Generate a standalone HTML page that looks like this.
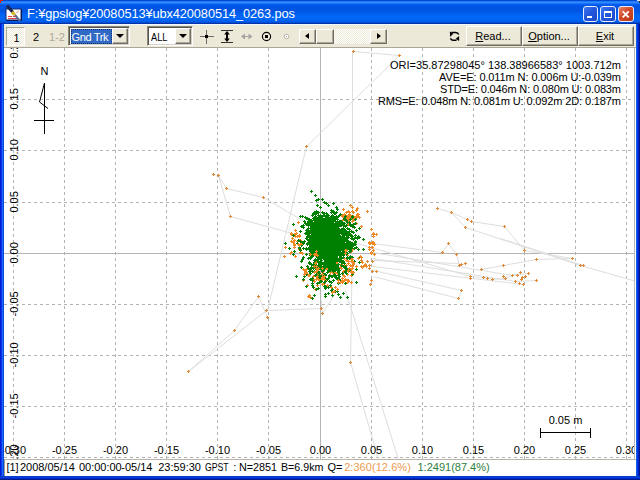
<!DOCTYPE html>
<html><head><meta charset="utf-8"><title>RTKPLOT</title>
<style>
html,body{margin:0;padding:0;width:640px;height:480px;overflow:hidden;background:#0b3fdc;font-family:"Liberation Sans",sans-serif;font-size:11px;color:#000}
*{box-sizing:border-box}
.abs{position:absolute}
#frame{position:absolute;left:0;top:0;width:640px;height:480px;background:linear-gradient(90deg,#0019d8 0 1px,#0838e8 1px 2px,#1868ff 2px 3px,#0848d8 3px 4px,#0848d8 4px 636px,#145ceb 636px 637px,#003ce1 637px 638px,#0028c8 638px 639px,#00148c 639px 640px)}
#title{position:absolute;left:0;top:0;width:640px;height:24px;background:linear-gradient(180deg,rgb(0,72,205) 0px 1px,rgb(30,120,250) 1px 2px,rgb(50,140,255) 2px 3px,rgb(25,115,250) 3px 4px,rgb(10,95,240) 4px 5px,rgb(0,86,232) 5px 6px,rgb(0,84,228) 6px 7px,rgb(0,84,226) 7px 8px,rgb(0,84,226) 8px 9px,rgb(0,84,226) 9px 10px,rgb(0,84,226) 10px 11px,rgb(0,86,228) 11px 12px,rgb(0,90,232) 12px 13px,rgb(0,94,236) 13px 14px,rgb(0,98,240) 14px 15px,rgb(0,100,243) 15px 16px,rgb(0,102,245) 16px 17px,rgb(0,102,245) 17px 18px,rgb(0,102,245) 18px 19px,rgb(0,100,243) 19px 20px,rgb(0,98,240) 20px 21px,rgb(0,92,232) 21px 22px,rgb(0,78,212) 22px 23px,rgb(0,50,170) 23px 24px)}
#title .txt{position:absolute;left:27px;top:5.5px;font-size:12.8px;line-height:16px;color:#fff;white-space:pre;letter-spacing:-0.1px}
.cb{position:absolute;top:5.5px;width:15.5px;height:16.5px;border:1px solid #e8eefc;border-radius:3px;background:linear-gradient(135deg,#3c78f0 0,#2458dc 45%,#1c48c8 100%)}
#bclose{background:linear-gradient(135deg,#e8866a 0,#d24a28 45%,#b83a1c 100%)}
#tb{position:absolute;left:4px;top:24px;width:632px;height:24px;background:#ece9d8;border-top:1px solid #eef9fc;border-bottom:1px solid #aca899}
#plot{position:absolute;left:4px;top:48px}
#status{position:absolute;left:4px;top:459px;width:632px;height:17px;background:#fff;border-top:1px solid #b8b5a8;border-left:1px solid #9d9a8c}
#status span{position:absolute;top:1px;line-height:13px;white-space:pre}
#bottom{position:absolute;left:0;top:476px;width:640px;height:4px;background:linear-gradient(180deg,#0a3cc8 0 1px,#003ce1 1px 2px,#0028be 2px 3px,#00198c 3px 4px)}
.btn{position:absolute;top:1px;height:20px;width:56px;padding-right:2px;background:#ece9d8;border:1px solid;border-color:#fff #716f64 #716f64 #fff;box-shadow:inset -1px -1px 0 #aca899;text-align:center;line-height:19px;white-space:pre}
.btn u{text-decoration:underline}
.combo{position:absolute;top:1px;height:20px;background:#fff;border:1px solid;border-color:#8a887c #fff #fff #8a887c;box-shadow:inset 1px 1px 0 #55534a,inset -1px -1px 0 #d4d0c8}
.dd{position:absolute;top:1px;right:1px;width:16px;height:16px;background:#ece9d8;border:1px solid;border-color:#fff #716f64 #716f64 #fff;box-shadow:inset -1px -1px 0 #aca899}
.dd:after{content:"";position:absolute;left:3px;top:5px;border:4px solid transparent;border-top-color:#000;border-bottom:0;border-left-width:4px;border-right-width:4px}
.chk{background-image:conic-gradient(#fff 25%,#ece9d8 0 50%,#fff 0 75%,#ece9d8 0);background-size:2px 2px}
</style></head><body>
<div id="frame"></div>
<div id="title">
 <svg class="abs" style="left:5px;top:4px" width="18" height="18" viewBox="0 0 18 18">
  <rect x="1" y="5" width="15" height="11" fill="#fff" stroke="#1a2a6c" stroke-width="1"/>
  <path d="M1.5 16.5H16.5V5.5" stroke="#0a1a50" fill="none"/>
  <path d="M3 12.5h4M8 12.5h3M3 14.5h9" stroke="#e04040" stroke-width="1"/>
  <path d="M11 9l3-2" stroke="#f0a0a0"/>
  <path d="M2 1.5L8 8.5" stroke="#1a2450" stroke-width="3"/>
  <path d="M7 8l3 3" stroke="#d8b820" stroke-width="3"/>
  <path d="M10 11l5 6" stroke="#5a6a9a" stroke-width="2"/>
 </svg>
 <div class="txt">F:¥gpslog¥20080513¥ubx420080514_0263.pos</div>
 <div class="cb" style="left:582.5px"><div class="abs" style="left:3.5px;top:9px;width:4.5px;height:2.5px;background:#fff"></div></div>
 <div class="cb" style="left:600.2px"><div class="abs" style="left:2.5px;top:4px;width:8px;height:7px;border:1px solid #fff;border-top-width:2px"></div></div>
 <div class="cb" id="bclose" style="left:618px"><svg class="abs" style="left:0;top:0" width="14" height="15"><path d="M3.7 4.4l6 6M9.7 4.4l-6 6" stroke="#fff" stroke-width="1.9"/></svg></div>
</div>
<div id="tb">
 <!-- offsets inside tb: page x-4, page y-25 -->
 <div class="abs chk" style="left:2px;top:2px;width:19px;height:19px;border:1px solid;border-color:#aca899 #fff #fff #aca899"></div>
 <div class="abs" style="left:8.5px;top:7.3px;width:8px;text-align:center;line-height:13px">1</div>
 <div class="abs" style="left:28px;top:6px;width:8px;text-align:center;line-height:13px">2</div>
 <div class="abs" style="left:45px;top:6px;line-height:13px;color:#aca899;white-space:pre">1-2</div>
 <div class="combo" style="left:64px;width:62px">
   <div class="abs" style="left:2px;top:2px;width:41px;height:15px;background:#316ac5;outline:1px dotted #16306e;outline-offset:-1px;color:#fff;line-height:17px;padding-left:0.5px;letter-spacing:-0.35px;white-space:pre">Gnd Trk</div>
   <div class="dd"></div>
 </div>
 <div class="combo" style="left:143px;width:46px">
   <div class="abs" style="left:2.5px;top:4px;line-height:13px;white-space:pre;transform:scaleX(0.84);transform-origin:0 0">ALL</div>
   <div class="dd"></div>
 </div>
 <svg class="abs" style="left:192px;top:0" width="100" height="23" viewBox="196 25 100 23">
  <!-- crosshair -->
  <path d="M200 36.5h14M206.5 30v14" stroke="#6a6a6a" shape-rendering="crispEdges"/>
  <rect x="205" y="35" width="3" height="3" fill="#000"/>
  <!-- vertical fit -->
  <path d="M221 30.5h12M221 42.5h12" stroke="#333" shape-rendering="crispEdges"/>
  <rect x="226" y="33" width="2" height="7" fill="#000"/><path d="M227 31l2.8 3.6h-5.6z" fill="#000"/><path d="M227 42l2.8-3.6h-5.6z" fill="#000"/>
  <!-- horizontal arrows (disabled) -->
  <path d="M243 36.5h8" stroke="#a4a4a0"/><path d="M241 36.5l4-3v6zM252.5 36.5l-4-3v6z" fill="#a4a4a0"/>
  <!-- target -->
  <circle cx="266.5" cy="36.5" r="4.1" fill="none" stroke="#000" stroke-width="1.15"/>
  <rect x="265" y="35" width="3" height="3" fill="#000"/>
  <!-- small disabled circle -->
  <circle cx="286.5" cy="36.5" r="2.3" fill="#fff" stroke="#b8b4a4" stroke-width="1"/>
  <rect x="286" y="36" width="1" height="1" fill="#aaa"/>
 </svg>
 <!-- scrollbar -->
 <div class="abs chk" style="left:295px;top:4px;width:89px;height:15px"></div>
 <div class="abs" style="left:295px;top:4px;width:17px;height:15px;background:#ece9d8;border:1px solid;border-color:#fff #716f64 #716f64 #fff;box-shadow:inset -1px -1px 0 #aca899"><div class="abs" style="left:5px;top:3px;border:4px solid transparent;border-right-color:#000;border-left:0;border-top-width:3.5px;border-bottom-width:3.5px"></div></div>
 <div class="abs" style="left:312px;top:4px;width:18px;height:15px;background:#ece9d8;border:1px solid;border-color:#fff #716f64 #716f64 #fff;box-shadow:inset -1px -1px 0 #aca899"></div>
 <div class="abs" style="left:366px;top:4px;width:17px;height:15px;background:#ece9d8;border:1px solid;border-color:#fff #716f64 #716f64 #fff;box-shadow:inset -1px -1px 0 #aca899"><div class="abs" style="left:6px;top:3px;border:4px solid transparent;border-left-color:#000;border-right:0;border-top-width:3.5px;border-bottom-width:3.5px"></div></div>
 <!-- refresh icon -->
 <svg class="abs" style="left:445px;top:5px" width="12" height="12" viewBox="0 0 12 12">
  <path d="M2.5 2.4H6.6Q9 2.6 9.7 4.6" stroke="#000" stroke-width="1.5" fill="none"/>
  <path d="M0.8 1.5L4.3 3.5L1.2 7.1Z" fill="#000"/>
  <path d="M1.4 8.3Q2.4 10.3 4.2 10.3H7.6" stroke="#000" stroke-width="1.5" fill="none"/>
  <path d="M10.1 5.9V11L6.7 8.7Z" fill="#000"/>
 </svg>
 <div class="btn" style="left:462px"><u>R</u>ead...</div>
 <div class="btn" style="left:518px"><u>O</u>ption...</div>
 <div class="btn" style="left:574px"><u>E</u>xit</div>
</div>
<svg id="plot" width="632" height="411" viewBox="0 0 632 411">
<rect width="632" height="411" fill="#fff"/>
<path d="M9.5 0V411M60.5 0V411M111.5 0V411M162.5 0V411M213.5 0V411M264.5 0V411M367.5 0V411M418.5 0V411M469.5 0V411M520.5 0V411M571.5 0V411M622.5 0V411M0 409.5H632M0 358.5H632M0 307.5H632M0 256.5H632M0 154.5H632M0 102.5H632M0 51.5H632" stroke="#b2b2b2" stroke-dasharray="3 3" fill="none" shape-rendering="crispEdges"/>
<path d="M316.5 0V411M0 205.5H632" stroke="#b4b4b4" fill="none" shape-rendering="crispEdges"/>
<path d="M209.5 126.5 L214.5 127.5 L222.5 140.5 L259.5 149.5 L308.5 178.5M214.5 127.5 L226.5 168.5 L288.5 185.5M349.5 3.5 L395.5 7.5 L302.5 98.5 L263.5 262.5 L316.5 260.5M348.5 3.5 L348.5 192.5 L346.5 314.5 L374.5 411.5M341.5 242.5 L394.5 411.5M184.5 323.5 L230.5 282.5 L254.5 248.5 L263.5 269.5M184.5 323.5 L262.5 262.5M317.5 252.5 L317.5 260.5 L318.5 265.5 L336.5 237.5M433.5 160.5 L447.5 164.5 L463.5 171.5 L467.5 173.5 L500.5 178.5 L520.5 202.5 L568.5 210.5 L532.5 211.5 L499.5 217.5 L477.5 221.5M447.5 164.5 L461.5 179.5 L576.5 217.5 L632.5 233.5M368.5 195.5 L438.5 204.5 L444.5 195.5 L452.5 206.5 L455.5 217.5 L461.5 215.5M496.5 190.5 L579.5 217.5M336.5 190.5 L466.5 228.5 L479.5 229.5 L488.5 231.5 L501.5 230.5 L516.5 224.5M368.5 204.5 L508.5 227.5 L524.5 225.5M369.5 222.5 L457.5 242.5 L454.5 250.5 L369.5 228.5M369.5 212.5 L455.5 215.5M368.5 210.5 L511.5 233.5 L532.5 232.5M368.5 218.5 L519.5 236.5" stroke="#dedede" fill="none" stroke-width="1"/>
<path d="M208 126h3v1h-3zM209 125h1v3h-1zM213 127h3v1h-3zM214 126h1v3h-1zM221 140h3v1h-3zM222 139h1v3h-1zM258 149h3v1h-3zM259 148h1v3h-1zM225 168h3v1h-3zM226 167h1v3h-1zM301 98h3v1h-3zM302 97h1v3h-1zM348 3h3v1h-3zM349 2h1v3h-1zM394 7h3v1h-3zM395 6h1v3h-1zM432 160h3v1h-3zM433 159h1v3h-1zM446 164h3v1h-3zM447 163h1v3h-1zM462 171h3v1h-3zM463 170h1v3h-1zM466 173h3v1h-3zM467 172h1v3h-1zM460 179h3v1h-3zM461 178h1v3h-1zM499 178h3v1h-3zM500 177h1v3h-1zM443 195h3v1h-3zM444 194h1v3h-1zM437 204h3v1h-3zM438 203h1v3h-1zM451 206h3v1h-3zM452 205h1v3h-1zM454 217h3v1h-3zM455 216h1v3h-1zM456 216h3v1h-3zM457 215h1v3h-1zM460 215h3v1h-3zM461 214h1v3h-1zM476 221h3v1h-3zM477 220h1v3h-1zM498 217h3v1h-3zM499 216h1v3h-1zM465 228h3v1h-3zM466 227h1v3h-1zM465 230h3v1h-3zM466 229h1v3h-1zM478 229h3v1h-3zM479 228h1v3h-1zM482 230h3v1h-3zM483 229h1v3h-1zM487 231h3v1h-3zM488 230h1v3h-1zM498 228h3v1h-3zM499 227h1v3h-1zM500 230h3v1h-3zM501 229h1v3h-1zM507 227h3v1h-3zM508 226h1v3h-1zM512 227h3v1h-3zM513 226h1v3h-1zM519 202h3v1h-3zM520 201h1v3h-1zM531 211h3v1h-3zM532 210h1v3h-1zM567 210h3v1h-3zM568 209h1v3h-1zM575 217h3v1h-3zM576 216h1v3h-1zM578 217h3v1h-3zM579 216h1v3h-1zM515 224h3v1h-3zM516 223h1v3h-1zM523 225h3v1h-3zM524 224h1v3h-1zM520 228h3v1h-3zM521 227h1v3h-1zM517 229h3v1h-3zM518 228h1v3h-1zM516 231h3v1h-3zM517 230h1v3h-1zM510 233h3v1h-3zM511 232h1v3h-1zM514 235h3v1h-3zM515 234h1v3h-1zM518 236h3v1h-3zM519 235h1v3h-1zM531 232h3v1h-3zM532 231h1v3h-1zM345 314h3v1h-3zM346 313h1v3h-1zM316 260h3v1h-3zM317 259h1v3h-1zM317 265h3v1h-3zM318 264h1v3h-1zM453 250h3v1h-3zM454 249h1v3h-1zM456 242h3v1h-3zM457 241h1v3h-1zM354 209h3v1h-3zM355 208h1v3h-1zM356 212h3v1h-3zM357 211h1v3h-1zM362 213h3v1h-3zM363 212h1v3h-1zM367 213h3v1h-3zM368 212h1v3h-1zM360 216h3v1h-3zM361 215h1v3h-1zM364 217h3v1h-3zM365 216h1v3h-1zM356 218h3v1h-3zM357 217h1v3h-1zM364 220h3v1h-3zM365 219h1v3h-1zM367 223h3v1h-3zM368 222h1v3h-1zM371 223h3v1h-3zM372 222h1v3h-1zM366 232h3v1h-3zM367 231h1v3h-1zM365 236h3v1h-3zM366 235h1v3h-1zM253 248h3v1h-3zM254 247h1v3h-1zM261 262h3v1h-3zM262 261h1v3h-1zM262 269h3v1h-3zM263 268h1v3h-1zM229 282h3v1h-3zM230 281h1v3h-1zM183 323h3v1h-3zM184 322h1v3h-1z" fill="#de8834" shape-rendering="crispEdges"/>
<path d="M290 188h3v1h-3zM291 187h1v3h-1zM289 197h3v1h-3zM290 196h1v3h-1zM295 193h3v1h-3zM296 192h1v3h-1zM286 193h3v1h-3zM287 192h1v3h-1zM287 190h3v1h-3zM288 189h1v3h-1zM291 185h3v1h-3zM292 184h1v3h-1zM289 186h3v1h-3zM290 185h1v3h-1zM293 196h3v1h-3zM294 195h1v3h-1zM295 204h3v1h-3zM296 203h1v3h-1zM297 205h3v1h-3zM298 204h1v3h-1zM295 192h3v1h-3zM296 191h1v3h-1zM289 196h3v1h-3zM290 195h1v3h-1zM289 192h3v1h-3zM290 191h1v3h-1zM288 194h3v1h-3zM289 193h1v3h-1zM296 196h3v1h-3zM297 195h1v3h-1zM289 199h3v1h-3zM290 198h1v3h-1zM286 185h3v1h-3zM287 184h1v3h-1zM285 205h3v1h-3zM286 204h1v3h-1zM294 192h3v1h-3zM295 191h1v3h-1zM286 186h3v1h-3zM287 185h1v3h-1zM294 187h3v1h-3zM295 186h1v3h-1zM292 193h3v1h-3zM293 192h1v3h-1zM294 188h3v1h-3zM295 187h1v3h-1zM295 201h3v1h-3zM296 200h1v3h-1zM293 174h3v1h-3zM294 173h1v3h-1zM292 195h3v1h-3zM293 194h1v3h-1zM290 182h3v1h-3zM291 181h1v3h-1zM286 204h3v1h-3zM287 203h1v3h-1zM279 208h3v1h-3zM280 207h1v3h-1zM280 199h3v1h-3zM281 198h1v3h-1zM292 188h3v1h-3zM293 187h1v3h-1zM294 201h3v1h-3zM295 200h1v3h-1zM290 208h3v1h-3zM291 207h1v3h-1zM347 169h3v1h-3zM348 168h1v3h-1zM343 169h3v1h-3zM344 168h1v3h-1zM354 169h3v1h-3zM355 168h1v3h-1zM337 167h3v1h-3zM338 166h1v3h-1zM343 163h3v1h-3zM344 162h1v3h-1zM345 157h3v1h-3zM346 156h1v3h-1zM346 169h3v1h-3zM347 168h1v3h-1zM352 160h3v1h-3zM353 159h1v3h-1zM344 169h3v1h-3zM345 168h1v3h-1zM338 167h3v1h-3zM339 166h1v3h-1zM337 167h3v1h-3zM338 166h1v3h-1zM344 167h3v1h-3zM345 166h1v3h-1zM348 170h3v1h-3zM349 169h1v3h-1zM351 162h3v1h-3zM352 161h1v3h-1zM349 169h3v1h-3zM350 168h1v3h-1zM337 172h3v1h-3zM338 171h1v3h-1zM348 171h3v1h-3zM349 170h1v3h-1zM341 173h3v1h-3zM342 172h1v3h-1zM353 166h3v1h-3zM354 165h1v3h-1zM343 167h3v1h-3zM344 166h1v3h-1zM343 176h3v1h-3zM344 175h1v3h-1zM342 170h3v1h-3zM343 169h1v3h-1zM351 168h3v1h-3zM352 167h1v3h-1zM344 172h3v1h-3zM345 171h1v3h-1zM362 163h3v1h-3zM363 162h1v3h-1zM352 166h3v1h-3zM353 165h1v3h-1zM338 169h3v1h-3zM339 168h1v3h-1zM345 167h3v1h-3zM346 166h1v3h-1zM351 175h3v1h-3zM352 174h1v3h-1zM350 169h3v1h-3zM351 168h1v3h-1zM349 171h3v1h-3zM350 170h1v3h-1zM347 163h3v1h-3zM348 162h1v3h-1zM336 167h3v1h-3zM337 166h1v3h-1zM336 167h3v1h-3zM337 166h1v3h-1zM350 170h3v1h-3zM351 169h1v3h-1zM341 169h3v1h-3zM342 168h1v3h-1zM345 167h3v1h-3zM346 166h1v3h-1zM349 170h3v1h-3zM350 169h1v3h-1zM334 177h3v1h-3zM335 176h1v3h-1zM334 167h3v1h-3zM335 166h1v3h-1zM348 164h3v1h-3zM349 163h1v3h-1zM342 173h3v1h-3zM343 172h1v3h-1zM343 174h3v1h-3zM344 173h1v3h-1zM352 168h3v1h-3zM353 167h1v3h-1zM343 172h3v1h-3zM344 171h1v3h-1zM345 157h3v1h-3zM346 156h1v3h-1zM347 169h3v1h-3zM348 168h1v3h-1zM335 166h3v1h-3zM336 165h1v3h-1zM356 178h3v1h-3zM357 177h1v3h-1zM348 168h3v1h-3zM349 167h1v3h-1zM342 176h3v1h-3zM343 175h1v3h-1zM352 166h3v1h-3zM353 165h1v3h-1zM339 166h3v1h-3zM340 165h1v3h-1zM341 164h3v1h-3zM342 163h1v3h-1zM338 161h3v1h-3zM339 160h1v3h-1zM344 164h3v1h-3zM345 163h1v3h-1zM341 173h3v1h-3zM342 172h1v3h-1zM347 159h3v1h-3zM348 158h1v3h-1zM341 168h3v1h-3zM342 167h1v3h-1zM347 173h3v1h-3zM348 172h1v3h-1zM368 188h3v1h-3zM369 187h1v3h-1zM368 202h3v1h-3zM369 201h1v3h-1zM368 194h3v1h-3zM369 193h1v3h-1zM368 186h3v1h-3zM369 185h1v3h-1zM371 186h3v1h-3zM372 185h1v3h-1zM368 185h3v1h-3zM369 184h1v3h-1zM366 181h3v1h-3zM367 180h1v3h-1zM366 205h3v1h-3zM367 204h1v3h-1zM367 195h3v1h-3zM368 194h1v3h-1zM369 196h3v1h-3zM370 195h1v3h-1zM364 201h3v1h-3zM365 200h1v3h-1zM364 194h3v1h-3zM365 193h1v3h-1zM364 199h3v1h-3zM365 198h1v3h-1zM369 206h3v1h-3zM370 205h1v3h-1zM365 195h3v1h-3zM366 194h1v3h-1zM367 199h3v1h-3zM368 198h1v3h-1zM364 195h3v1h-3zM365 194h1v3h-1zM367 194h3v1h-3zM368 193h1v3h-1zM366 204h3v1h-3zM367 203h1v3h-1zM344 220h3v1h-3zM345 219h1v3h-1zM342 222h3v1h-3zM343 221h1v3h-1zM328 219h3v1h-3zM329 218h1v3h-1zM335 208h3v1h-3zM336 207h1v3h-1zM336 218h3v1h-3zM337 217h1v3h-1zM340 220h3v1h-3zM341 219h1v3h-1zM343 233h3v1h-3zM344 232h1v3h-1zM341 212h3v1h-3zM342 211h1v3h-1zM339 232h3v1h-3zM340 231h1v3h-1zM343 215h3v1h-3zM344 214h1v3h-1zM343 232h3v1h-3zM344 231h1v3h-1zM346 203h3v1h-3zM347 202h1v3h-1zM329 217h3v1h-3zM330 216h1v3h-1zM347 201h3v1h-3zM348 200h1v3h-1zM348 216h3v1h-3zM349 215h1v3h-1zM338 223h3v1h-3zM339 222h1v3h-1zM335 213h3v1h-3zM336 212h1v3h-1zM340 222h3v1h-3zM341 221h1v3h-1zM349 213h3v1h-3zM350 212h1v3h-1zM342 232h3v1h-3zM343 231h1v3h-1zM327 215h3v1h-3zM328 214h1v3h-1zM319 235h3v1h-3zM320 234h1v3h-1zM342 234h3v1h-3zM343 233h1v3h-1zM330 224h3v1h-3zM331 223h1v3h-1zM336 216h3v1h-3zM337 215h1v3h-1zM340 231h3v1h-3zM341 230h1v3h-1zM342 222h3v1h-3zM343 221h1v3h-1zM346 234h3v1h-3zM347 233h1v3h-1zM330 218h3v1h-3zM331 217h1v3h-1zM341 217h3v1h-3zM342 216h1v3h-1zM336 213h3v1h-3zM337 212h1v3h-1zM345 221h3v1h-3zM346 220h1v3h-1zM343 223h3v1h-3zM344 222h1v3h-1zM347 220h3v1h-3zM348 219h1v3h-1zM332 222h3v1h-3zM333 221h1v3h-1zM333 226h3v1h-3zM334 225h1v3h-1zM335 219h3v1h-3zM336 218h1v3h-1zM337 214h3v1h-3zM338 213h1v3h-1zM335 212h3v1h-3zM336 211h1v3h-1zM332 215h3v1h-3zM333 214h1v3h-1zM336 217h3v1h-3zM337 216h1v3h-1zM329 228h3v1h-3zM330 227h1v3h-1zM346 227h3v1h-3zM347 226h1v3h-1zM337 214h3v1h-3zM338 213h1v3h-1zM332 224h3v1h-3zM333 223h1v3h-1zM341 212h3v1h-3zM342 211h1v3h-1zM329 226h3v1h-3zM330 225h1v3h-1zM342 207h3v1h-3zM343 206h1v3h-1zM338 227h3v1h-3zM339 226h1v3h-1zM351 218h3v1h-3zM352 217h1v3h-1zM343 222h3v1h-3zM344 221h1v3h-1zM335 219h3v1h-3zM336 218h1v3h-1zM346 211h3v1h-3zM347 210h1v3h-1zM341 221h3v1h-3zM342 220h1v3h-1zM344 220h3v1h-3zM345 219h1v3h-1zM320 226h3v1h-3zM321 225h1v3h-1zM337 225h3v1h-3zM338 224h1v3h-1zM337 230h3v1h-3zM338 229h1v3h-1zM348 224h3v1h-3zM349 223h1v3h-1zM333 211h3v1h-3zM334 210h1v3h-1zM342 226h3v1h-3zM343 225h1v3h-1zM339 210h3v1h-3zM340 209h1v3h-1zM331 214h3v1h-3zM332 213h1v3h-1zM336 220h3v1h-3zM337 219h1v3h-1zM343 213h3v1h-3zM344 212h1v3h-1zM339 217h3v1h-3zM340 216h1v3h-1zM339 228h3v1h-3zM340 227h1v3h-1zM339 215h3v1h-3zM340 214h1v3h-1zM308 231h3v1h-3zM309 230h1v3h-1zM304 227h3v1h-3zM305 226h1v3h-1zM345 210h3v1h-3zM346 209h1v3h-1zM312 229h3v1h-3zM313 228h1v3h-1zM317 236h3v1h-3zM318 235h1v3h-1zM317 227h3v1h-3zM318 226h1v3h-1zM328 225h3v1h-3zM329 224h1v3h-1zM311 218h3v1h-3zM312 217h1v3h-1zM308 228h3v1h-3zM309 227h1v3h-1zM313 219h3v1h-3zM314 218h1v3h-1zM309 214h3v1h-3zM310 213h1v3h-1zM303 227h3v1h-3zM304 226h1v3h-1zM298 232h3v1h-3zM299 231h1v3h-1zM317 224h3v1h-3zM318 223h1v3h-1zM313 225h3v1h-3zM314 224h1v3h-1zM331 221h3v1h-3zM332 220h1v3h-1zM312 237h3v1h-3zM313 236h1v3h-1zM313 228h3v1h-3zM314 227h1v3h-1zM329 223h3v1h-3zM330 222h1v3h-1zM300 224h3v1h-3zM301 223h1v3h-1zM325 227h3v1h-3zM326 226h1v3h-1zM309 233h3v1h-3zM310 232h1v3h-1zM305 222h3v1h-3zM306 221h1v3h-1zM321 220h3v1h-3zM322 219h1v3h-1zM318 228h3v1h-3zM319 227h1v3h-1zM305 225h3v1h-3zM306 224h1v3h-1zM319 216h3v1h-3zM320 215h1v3h-1zM332 225h3v1h-3zM333 224h1v3h-1zM325 224h3v1h-3zM326 223h1v3h-1zM318 223h3v1h-3zM319 222h1v3h-1zM311 227h3v1h-3zM312 226h1v3h-1zM316 227h3v1h-3zM317 226h1v3h-1zM322 237h3v1h-3zM323 236h1v3h-1zM315 230h3v1h-3zM316 229h1v3h-1zM321 232h3v1h-3zM322 231h1v3h-1zM327 223h3v1h-3zM328 222h1v3h-1zM302 226h3v1h-3zM303 225h1v3h-1zM319 221h3v1h-3zM320 220h1v3h-1zM322 221h3v1h-3zM323 220h1v3h-1zM314 232h3v1h-3zM315 231h1v3h-1zM310 241h3v1h-3zM311 240h1v3h-1zM332 231h3v1h-3zM333 230h1v3h-1zM316 229h3v1h-3zM317 228h1v3h-1zM316 229h3v1h-3zM317 228h1v3h-1zM311 231h3v1h-3zM312 230h1v3h-1zM314 225h3v1h-3zM315 224h1v3h-1zM314 225h3v1h-3zM315 224h1v3h-1zM316 230h3v1h-3zM317 229h1v3h-1zM302 237h3v1h-3zM303 236h1v3h-1zM301 226h3v1h-3zM302 225h1v3h-1zM311 214h3v1h-3zM312 213h1v3h-1zM313 231h3v1h-3zM314 230h1v3h-1zM311 227h3v1h-3zM312 226h1v3h-1zM324 220h3v1h-3zM325 219h1v3h-1zM316 220h3v1h-3zM317 219h1v3h-1z" fill="#ee8820" shape-rendering="crispEdges"/>
<path d="M334 191h3v1h-3zM335 190h1v3h-1zM317 195h3v1h-3zM318 194h1v3h-1zM321 178h3v1h-3zM322 177h1v3h-1zM324 213h3v1h-3zM325 212h1v3h-1zM314 193h3v1h-3zM315 192h1v3h-1zM321 188h3v1h-3zM322 187h1v3h-1zM320 207h3v1h-3zM321 206h1v3h-1zM306 198h3v1h-3zM307 197h1v3h-1zM329 200h3v1h-3zM330 199h1v3h-1zM325 203h3v1h-3zM326 202h1v3h-1zM315 170h3v1h-3zM316 169h1v3h-1zM319 209h3v1h-3zM320 208h1v3h-1zM325 188h3v1h-3zM326 187h1v3h-1zM318 194h3v1h-3zM319 193h1v3h-1zM319 201h3v1h-3zM320 200h1v3h-1zM309 184h3v1h-3zM310 183h1v3h-1zM325 195h3v1h-3zM326 194h1v3h-1zM322 199h3v1h-3zM323 198h1v3h-1zM323 191h3v1h-3zM324 190h1v3h-1zM308 197h3v1h-3zM309 196h1v3h-1zM334 175h3v1h-3zM335 174h1v3h-1zM322 179h3v1h-3zM323 178h1v3h-1zM317 180h3v1h-3zM318 179h1v3h-1zM337 195h3v1h-3zM338 194h1v3h-1zM320 230h3v1h-3zM321 229h1v3h-1zM309 194h3v1h-3zM310 193h1v3h-1zM317 190h3v1h-3zM318 189h1v3h-1zM302 191h3v1h-3zM303 190h1v3h-1zM329 202h3v1h-3zM330 201h1v3h-1zM317 199h3v1h-3zM318 198h1v3h-1zM314 180h3v1h-3zM315 179h1v3h-1zM329 202h3v1h-3zM330 201h1v3h-1zM307 191h3v1h-3zM308 190h1v3h-1zM325 200h3v1h-3zM326 199h1v3h-1zM304 171h3v1h-3zM305 170h1v3h-1zM315 176h3v1h-3zM316 175h1v3h-1zM311 198h3v1h-3zM312 197h1v3h-1zM332 173h3v1h-3zM333 172h1v3h-1zM335 195h3v1h-3zM336 194h1v3h-1zM318 195h3v1h-3zM319 194h1v3h-1zM327 193h3v1h-3zM328 192h1v3h-1zM319 195h3v1h-3zM320 194h1v3h-1zM325 194h3v1h-3zM326 193h1v3h-1zM314 196h3v1h-3zM315 195h1v3h-1zM306 187h3v1h-3zM307 186h1v3h-1zM306 191h3v1h-3zM307 190h1v3h-1zM324 221h3v1h-3zM325 220h1v3h-1zM339 203h3v1h-3zM340 202h1v3h-1zM323 198h3v1h-3zM324 197h1v3h-1zM316 196h3v1h-3zM317 195h1v3h-1zM336 184h3v1h-3zM337 183h1v3h-1zM322 194h3v1h-3zM323 193h1v3h-1zM321 189h3v1h-3zM322 188h1v3h-1zM323 201h3v1h-3zM324 200h1v3h-1zM319 182h3v1h-3zM320 181h1v3h-1zM318 167h3v1h-3zM319 166h1v3h-1zM309 186h3v1h-3zM310 185h1v3h-1zM325 199h3v1h-3zM326 198h1v3h-1zM320 217h3v1h-3zM321 216h1v3h-1zM330 202h3v1h-3zM331 201h1v3h-1zM317 182h3v1h-3zM318 181h1v3h-1zM305 189h3v1h-3zM306 188h1v3h-1zM320 182h3v1h-3zM321 181h1v3h-1zM334 190h3v1h-3zM335 189h1v3h-1zM317 182h3v1h-3zM318 181h1v3h-1zM313 175h3v1h-3zM314 174h1v3h-1zM311 196h3v1h-3zM312 195h1v3h-1zM312 193h3v1h-3zM313 192h1v3h-1zM318 190h3v1h-3zM319 189h1v3h-1zM311 195h3v1h-3zM312 194h1v3h-1zM333 212h3v1h-3zM334 211h1v3h-1zM318 193h3v1h-3zM319 192h1v3h-1zM321 188h3v1h-3zM322 187h1v3h-1zM332 200h3v1h-3zM333 199h1v3h-1zM333 175h3v1h-3zM334 174h1v3h-1zM319 199h3v1h-3zM320 198h1v3h-1zM323 184h3v1h-3zM324 183h1v3h-1zM327 183h3v1h-3zM328 182h1v3h-1zM319 193h3v1h-3zM320 192h1v3h-1zM306 209h3v1h-3zM307 208h1v3h-1zM326 184h3v1h-3zM327 183h1v3h-1zM328 201h3v1h-3zM329 200h1v3h-1zM324 195h3v1h-3zM325 194h1v3h-1zM313 177h3v1h-3zM314 176h1v3h-1zM319 201h3v1h-3zM320 200h1v3h-1zM316 183h3v1h-3zM317 182h1v3h-1zM318 177h3v1h-3zM319 176h1v3h-1zM331 183h3v1h-3zM332 182h1v3h-1zM333 184h3v1h-3zM334 183h1v3h-1zM326 198h3v1h-3zM327 197h1v3h-1zM325 184h3v1h-3zM326 183h1v3h-1zM326 207h3v1h-3zM327 206h1v3h-1zM320 194h3v1h-3zM321 193h1v3h-1zM320 184h3v1h-3zM321 183h1v3h-1zM315 183h3v1h-3zM316 182h1v3h-1zM320 194h3v1h-3zM321 193h1v3h-1zM339 171h3v1h-3zM340 170h1v3h-1zM328 169h3v1h-3zM329 168h1v3h-1zM318 182h3v1h-3zM319 181h1v3h-1zM317 198h3v1h-3zM318 197h1v3h-1zM313 193h3v1h-3zM314 192h1v3h-1zM324 192h3v1h-3zM325 191h1v3h-1zM324 189h3v1h-3zM325 188h1v3h-1zM309 169h3v1h-3zM310 168h1v3h-1zM324 188h3v1h-3zM325 187h1v3h-1zM316 173h3v1h-3zM317 172h1v3h-1zM332 200h3v1h-3zM333 199h1v3h-1zM322 191h3v1h-3zM323 190h1v3h-1zM335 191h3v1h-3zM336 190h1v3h-1zM317 196h3v1h-3zM318 195h1v3h-1zM318 195h3v1h-3zM319 194h1v3h-1zM323 194h3v1h-3zM324 193h1v3h-1zM329 195h3v1h-3zM330 194h1v3h-1zM325 185h3v1h-3zM326 184h1v3h-1zM310 178h3v1h-3zM311 177h1v3h-1zM322 195h3v1h-3zM323 194h1v3h-1zM321 206h3v1h-3zM322 205h1v3h-1zM317 202h3v1h-3zM318 201h1v3h-1zM315 189h3v1h-3zM316 188h1v3h-1zM335 198h3v1h-3zM336 197h1v3h-1zM317 187h3v1h-3zM318 186h1v3h-1zM314 195h3v1h-3zM315 194h1v3h-1zM326 185h3v1h-3zM327 184h1v3h-1zM322 193h3v1h-3zM323 192h1v3h-1zM320 212h3v1h-3zM321 211h1v3h-1zM327 199h3v1h-3zM328 198h1v3h-1zM325 207h3v1h-3zM326 206h1v3h-1zM323 184h3v1h-3zM324 183h1v3h-1zM328 185h3v1h-3zM329 184h1v3h-1zM323 191h3v1h-3zM324 190h1v3h-1zM315 197h3v1h-3zM316 196h1v3h-1zM318 189h3v1h-3zM319 188h1v3h-1zM316 202h3v1h-3zM317 201h1v3h-1zM322 186h3v1h-3zM323 185h1v3h-1zM312 205h3v1h-3zM313 204h1v3h-1zM305 201h3v1h-3zM306 200h1v3h-1zM321 180h3v1h-3zM322 179h1v3h-1zM310 197h3v1h-3zM311 196h1v3h-1zM304 189h3v1h-3zM305 188h1v3h-1zM324 202h3v1h-3zM325 201h1v3h-1zM315 186h3v1h-3zM316 185h1v3h-1zM325 195h3v1h-3zM326 194h1v3h-1zM316 197h3v1h-3zM317 196h1v3h-1zM311 163h3v1h-3zM312 162h1v3h-1zM310 172h3v1h-3zM311 171h1v3h-1zM316 193h3v1h-3zM317 192h1v3h-1zM318 190h3v1h-3zM319 189h1v3h-1zM314 202h3v1h-3zM315 201h1v3h-1zM318 194h3v1h-3zM319 193h1v3h-1zM308 179h3v1h-3zM309 178h1v3h-1zM321 195h3v1h-3zM322 194h1v3h-1zM306 184h3v1h-3zM307 183h1v3h-1zM319 189h3v1h-3zM320 188h1v3h-1zM326 186h3v1h-3zM327 185h1v3h-1zM329 195h3v1h-3zM330 194h1v3h-1zM335 177h3v1h-3zM336 176h1v3h-1zM308 180h3v1h-3zM309 179h1v3h-1zM327 169h3v1h-3zM328 168h1v3h-1zM330 213h3v1h-3zM331 212h1v3h-1zM329 181h3v1h-3zM330 180h1v3h-1zM313 183h3v1h-3zM314 182h1v3h-1zM324 180h3v1h-3zM325 179h1v3h-1zM336 185h3v1h-3zM337 184h1v3h-1zM308 187h3v1h-3zM309 186h1v3h-1zM324 198h3v1h-3zM325 197h1v3h-1zM330 193h3v1h-3zM331 192h1v3h-1zM315 195h3v1h-3zM316 194h1v3h-1zM325 185h3v1h-3zM326 184h1v3h-1zM312 191h3v1h-3zM313 190h1v3h-1zM314 204h3v1h-3zM315 203h1v3h-1zM314 191h3v1h-3zM315 190h1v3h-1zM322 195h3v1h-3zM323 194h1v3h-1zM320 171h3v1h-3zM321 170h1v3h-1zM328 197h3v1h-3zM329 196h1v3h-1zM313 194h3v1h-3zM314 193h1v3h-1zM319 205h3v1h-3zM320 204h1v3h-1zM328 163h3v1h-3zM329 162h1v3h-1zM325 192h3v1h-3zM326 191h1v3h-1zM310 190h3v1h-3zM311 189h1v3h-1zM326 192h3v1h-3zM327 191h1v3h-1zM317 185h3v1h-3zM318 184h1v3h-1zM324 194h3v1h-3zM325 193h1v3h-1zM323 199h3v1h-3zM324 198h1v3h-1zM330 192h3v1h-3zM331 191h1v3h-1zM321 188h3v1h-3zM322 187h1v3h-1zM305 189h3v1h-3zM306 188h1v3h-1zM309 187h3v1h-3zM310 186h1v3h-1zM326 192h3v1h-3zM327 191h1v3h-1zM318 184h3v1h-3zM319 183h1v3h-1zM330 171h3v1h-3zM331 170h1v3h-1zM323 205h3v1h-3zM324 204h1v3h-1zM314 173h3v1h-3zM315 172h1v3h-1zM329 190h3v1h-3zM330 189h1v3h-1zM314 178h3v1h-3zM315 177h1v3h-1zM304 188h3v1h-3zM305 187h1v3h-1zM337 181h3v1h-3zM338 180h1v3h-1zM305 191h3v1h-3zM306 190h1v3h-1zM326 183h3v1h-3zM327 182h1v3h-1zM328 178h3v1h-3zM329 177h1v3h-1zM322 194h3v1h-3zM323 193h1v3h-1zM307 205h3v1h-3zM308 204h1v3h-1zM329 195h3v1h-3zM330 194h1v3h-1zM309 192h3v1h-3zM310 191h1v3h-1zM309 180h3v1h-3zM310 179h1v3h-1zM318 190h3v1h-3zM319 189h1v3h-1zM327 196h3v1h-3zM328 195h1v3h-1zM323 184h3v1h-3zM324 183h1v3h-1zM327 200h3v1h-3zM328 199h1v3h-1zM317 191h3v1h-3zM318 190h1v3h-1zM319 195h3v1h-3zM320 194h1v3h-1zM311 186h3v1h-3zM312 185h1v3h-1zM318 186h3v1h-3zM319 185h1v3h-1zM325 193h3v1h-3zM326 192h1v3h-1zM318 195h3v1h-3zM319 194h1v3h-1zM324 195h3v1h-3zM325 194h1v3h-1zM316 181h3v1h-3zM317 180h1v3h-1zM316 184h3v1h-3zM317 183h1v3h-1zM321 191h3v1h-3zM322 190h1v3h-1zM319 172h3v1h-3zM320 171h1v3h-1zM325 202h3v1h-3zM326 201h1v3h-1zM322 194h3v1h-3zM323 193h1v3h-1zM335 191h3v1h-3zM336 190h1v3h-1zM319 184h3v1h-3zM320 183h1v3h-1zM319 199h3v1h-3zM320 198h1v3h-1zM312 188h3v1h-3zM313 187h1v3h-1zM321 210h3v1h-3zM322 209h1v3h-1zM326 195h3v1h-3zM327 194h1v3h-1zM314 176h3v1h-3zM315 175h1v3h-1zM320 198h3v1h-3zM321 197h1v3h-1zM326 186h3v1h-3zM327 185h1v3h-1zM319 186h3v1h-3zM320 185h1v3h-1zM316 189h3v1h-3zM317 188h1v3h-1zM328 190h3v1h-3zM329 189h1v3h-1zM321 194h3v1h-3zM322 193h1v3h-1zM324 199h3v1h-3zM325 198h1v3h-1zM330 196h3v1h-3zM331 195h1v3h-1zM330 184h3v1h-3zM331 183h1v3h-1zM318 177h3v1h-3zM319 176h1v3h-1zM316 183h3v1h-3zM317 182h1v3h-1zM323 195h3v1h-3zM324 194h1v3h-1zM319 200h3v1h-3zM320 199h1v3h-1zM305 209h3v1h-3zM306 208h1v3h-1zM331 177h3v1h-3zM332 176h1v3h-1zM321 192h3v1h-3zM322 191h1v3h-1zM327 189h3v1h-3zM328 188h1v3h-1zM311 187h3v1h-3zM312 186h1v3h-1zM331 192h3v1h-3zM332 191h1v3h-1zM316 188h3v1h-3zM317 187h1v3h-1zM320 188h3v1h-3zM321 187h1v3h-1zM309 184h3v1h-3zM310 183h1v3h-1zM319 195h3v1h-3zM320 194h1v3h-1zM319 202h3v1h-3zM320 201h1v3h-1zM319 208h3v1h-3zM320 207h1v3h-1zM324 186h3v1h-3zM325 185h1v3h-1zM321 180h3v1h-3zM322 179h1v3h-1zM329 188h3v1h-3zM330 187h1v3h-1zM317 182h3v1h-3zM318 181h1v3h-1zM312 201h3v1h-3zM313 200h1v3h-1zM320 183h3v1h-3zM321 182h1v3h-1zM326 192h3v1h-3zM327 191h1v3h-1zM331 177h3v1h-3zM332 176h1v3h-1zM327 187h3v1h-3zM328 186h1v3h-1zM306 193h3v1h-3zM307 192h1v3h-1zM324 206h3v1h-3zM325 205h1v3h-1zM332 184h3v1h-3zM333 183h1v3h-1zM321 195h3v1h-3zM322 194h1v3h-1zM316 170h3v1h-3zM317 169h1v3h-1zM323 179h3v1h-3zM324 178h1v3h-1zM316 183h3v1h-3zM317 182h1v3h-1zM326 186h3v1h-3zM327 185h1v3h-1zM320 195h3v1h-3zM321 194h1v3h-1zM332 197h3v1h-3zM333 196h1v3h-1zM325 174h3v1h-3zM326 173h1v3h-1zM315 196h3v1h-3zM316 195h1v3h-1zM325 179h3v1h-3zM326 178h1v3h-1zM328 210h3v1h-3zM329 209h1v3h-1zM316 194h3v1h-3zM317 193h1v3h-1zM317 192h3v1h-3zM318 191h1v3h-1zM302 189h3v1h-3zM303 188h1v3h-1zM328 191h3v1h-3zM329 190h1v3h-1zM316 191h3v1h-3zM317 190h1v3h-1zM303 184h3v1h-3zM304 183h1v3h-1zM306 198h3v1h-3zM307 197h1v3h-1zM319 194h3v1h-3zM320 193h1v3h-1zM327 198h3v1h-3zM328 197h1v3h-1zM320 190h3v1h-3zM321 189h1v3h-1zM324 198h3v1h-3zM325 197h1v3h-1zM311 183h3v1h-3zM312 182h1v3h-1zM310 227h3v1h-3zM311 226h1v3h-1zM328 184h3v1h-3zM329 183h1v3h-1zM325 186h3v1h-3zM326 185h1v3h-1zM320 201h3v1h-3zM321 200h1v3h-1zM331 203h3v1h-3zM332 202h1v3h-1zM313 183h3v1h-3zM314 182h1v3h-1zM317 174h3v1h-3zM318 173h1v3h-1zM329 177h3v1h-3zM330 176h1v3h-1zM336 181h3v1h-3zM337 180h1v3h-1zM321 183h3v1h-3zM322 182h1v3h-1zM334 189h3v1h-3zM335 188h1v3h-1zM316 201h3v1h-3zM317 200h1v3h-1zM323 202h3v1h-3zM324 201h1v3h-1zM319 185h3v1h-3zM320 184h1v3h-1zM307 196h3v1h-3zM308 195h1v3h-1zM323 200h3v1h-3zM324 199h1v3h-1zM328 205h3v1h-3zM329 204h1v3h-1zM319 189h3v1h-3zM320 188h1v3h-1zM320 183h3v1h-3zM321 182h1v3h-1zM332 198h3v1h-3zM333 197h1v3h-1zM310 206h3v1h-3zM311 205h1v3h-1zM308 185h3v1h-3zM309 184h1v3h-1zM315 211h3v1h-3zM316 210h1v3h-1zM311 208h3v1h-3zM312 207h1v3h-1zM332 188h3v1h-3zM333 187h1v3h-1zM323 175h3v1h-3zM324 174h1v3h-1zM313 185h3v1h-3zM314 184h1v3h-1zM315 187h3v1h-3zM316 186h1v3h-1zM344 196h3v1h-3zM345 195h1v3h-1zM315 174h3v1h-3zM316 173h1v3h-1zM314 216h3v1h-3zM315 215h1v3h-1zM323 215h3v1h-3zM324 214h1v3h-1zM326 183h3v1h-3zM327 182h1v3h-1zM322 172h3v1h-3zM323 171h1v3h-1zM313 189h3v1h-3zM314 188h1v3h-1zM311 195h3v1h-3zM312 194h1v3h-1zM325 205h3v1h-3zM326 204h1v3h-1zM320 198h3v1h-3zM321 197h1v3h-1zM307 189h3v1h-3zM308 188h1v3h-1zM330 171h3v1h-3zM331 170h1v3h-1zM327 196h3v1h-3zM328 195h1v3h-1zM319 199h3v1h-3zM320 198h1v3h-1zM318 188h3v1h-3zM319 187h1v3h-1zM322 194h3v1h-3zM323 193h1v3h-1zM315 193h3v1h-3zM316 192h1v3h-1zM309 188h3v1h-3zM310 187h1v3h-1zM323 179h3v1h-3zM324 178h1v3h-1zM309 194h3v1h-3zM310 193h1v3h-1zM324 176h3v1h-3zM325 175h1v3h-1zM309 205h3v1h-3zM310 204h1v3h-1zM320 182h3v1h-3zM321 181h1v3h-1zM319 196h3v1h-3zM320 195h1v3h-1zM335 183h3v1h-3zM336 182h1v3h-1zM312 195h3v1h-3zM313 194h1v3h-1zM309 189h3v1h-3zM310 188h1v3h-1zM315 196h3v1h-3zM316 195h1v3h-1zM311 183h3v1h-3zM312 182h1v3h-1zM316 174h3v1h-3zM317 173h1v3h-1zM324 188h3v1h-3zM325 187h1v3h-1zM327 187h3v1h-3zM328 186h1v3h-1zM334 175h3v1h-3zM335 174h1v3h-1zM314 184h3v1h-3zM315 183h1v3h-1zM342 174h3v1h-3zM343 173h1v3h-1zM337 192h3v1h-3zM338 191h1v3h-1zM319 187h3v1h-3zM320 186h1v3h-1zM302 191h3v1h-3zM303 190h1v3h-1zM320 217h3v1h-3zM321 216h1v3h-1zM321 192h3v1h-3zM322 191h1v3h-1zM302 195h3v1h-3zM303 194h1v3h-1zM321 197h3v1h-3zM322 196h1v3h-1zM319 189h3v1h-3zM320 188h1v3h-1zM314 185h3v1h-3zM315 184h1v3h-1zM326 200h3v1h-3zM327 199h1v3h-1zM329 201h3v1h-3zM330 200h1v3h-1zM322 189h3v1h-3zM323 188h1v3h-1zM315 187h3v1h-3zM316 186h1v3h-1zM314 185h3v1h-3zM315 184h1v3h-1zM321 203h3v1h-3zM322 202h1v3h-1zM325 185h3v1h-3zM326 184h1v3h-1zM316 200h3v1h-3zM317 199h1v3h-1zM302 185h3v1h-3zM303 184h1v3h-1zM325 187h3v1h-3zM326 186h1v3h-1zM307 198h3v1h-3zM308 197h1v3h-1zM322 183h3v1h-3zM323 182h1v3h-1zM335 189h3v1h-3zM336 188h1v3h-1zM320 179h3v1h-3zM321 178h1v3h-1zM311 182h3v1h-3zM312 181h1v3h-1zM309 198h3v1h-3zM310 197h1v3h-1zM330 197h3v1h-3zM331 196h1v3h-1zM320 179h3v1h-3zM321 178h1v3h-1zM325 179h3v1h-3zM326 178h1v3h-1zM328 217h3v1h-3zM329 216h1v3h-1zM320 184h3v1h-3zM321 183h1v3h-1zM318 182h3v1h-3zM319 181h1v3h-1zM313 196h3v1h-3zM314 195h1v3h-1zM295 183h3v1h-3zM296 182h1v3h-1zM308 187h3v1h-3zM309 186h1v3h-1zM320 200h3v1h-3zM321 199h1v3h-1zM319 201h3v1h-3zM320 200h1v3h-1zM324 189h3v1h-3zM325 188h1v3h-1zM319 204h3v1h-3zM320 203h1v3h-1zM322 189h3v1h-3zM323 188h1v3h-1zM327 188h3v1h-3zM328 187h1v3h-1zM313 191h3v1h-3zM314 190h1v3h-1zM318 188h3v1h-3zM319 187h1v3h-1zM307 196h3v1h-3zM308 195h1v3h-1zM328 194h3v1h-3zM329 193h1v3h-1zM321 183h3v1h-3zM322 182h1v3h-1zM325 193h3v1h-3zM326 192h1v3h-1zM333 185h3v1h-3zM334 184h1v3h-1zM329 185h3v1h-3zM330 184h1v3h-1zM320 189h3v1h-3zM321 188h1v3h-1zM327 201h3v1h-3zM328 200h1v3h-1zM309 193h3v1h-3zM310 192h1v3h-1zM324 204h3v1h-3zM325 203h1v3h-1zM322 207h3v1h-3zM323 206h1v3h-1zM307 190h3v1h-3zM308 189h1v3h-1zM331 185h3v1h-3zM332 184h1v3h-1zM315 183h3v1h-3zM316 182h1v3h-1zM326 194h3v1h-3zM327 193h1v3h-1zM317 200h3v1h-3zM318 199h1v3h-1zM329 207h3v1h-3zM330 206h1v3h-1zM331 177h3v1h-3zM332 176h1v3h-1zM314 200h3v1h-3zM315 199h1v3h-1zM308 202h3v1h-3zM309 201h1v3h-1zM319 216h3v1h-3zM320 215h1v3h-1zM327 193h3v1h-3zM328 192h1v3h-1zM317 190h3v1h-3zM318 189h1v3h-1zM315 175h3v1h-3zM316 174h1v3h-1zM325 183h3v1h-3zM326 182h1v3h-1zM298 179h3v1h-3zM299 178h1v3h-1zM315 180h3v1h-3zM316 179h1v3h-1zM309 182h3v1h-3zM310 181h1v3h-1zM323 175h3v1h-3zM324 174h1v3h-1zM314 190h3v1h-3zM315 189h1v3h-1zM311 195h3v1h-3zM312 194h1v3h-1zM318 199h3v1h-3zM319 198h1v3h-1zM308 190h3v1h-3zM309 189h1v3h-1zM320 202h3v1h-3zM321 201h1v3h-1zM315 202h3v1h-3zM316 201h1v3h-1zM317 175h3v1h-3zM318 174h1v3h-1zM315 188h3v1h-3zM316 187h1v3h-1zM328 178h3v1h-3zM329 177h1v3h-1zM320 181h3v1h-3zM321 180h1v3h-1zM325 193h3v1h-3zM326 192h1v3h-1zM324 190h3v1h-3zM325 189h1v3h-1zM314 206h3v1h-3zM315 205h1v3h-1zM325 212h3v1h-3zM326 211h1v3h-1zM323 195h3v1h-3zM324 194h1v3h-1zM323 189h3v1h-3zM324 188h1v3h-1zM317 189h3v1h-3zM318 188h1v3h-1zM317 191h3v1h-3zM318 190h1v3h-1zM327 197h3v1h-3zM328 196h1v3h-1zM338 183h3v1h-3zM339 182h1v3h-1zM314 197h3v1h-3zM315 196h1v3h-1zM325 188h3v1h-3zM326 187h1v3h-1zM317 202h3v1h-3zM318 201h1v3h-1zM327 205h3v1h-3zM328 204h1v3h-1zM324 209h3v1h-3zM325 208h1v3h-1zM329 189h3v1h-3zM330 188h1v3h-1zM298 177h3v1h-3zM299 176h1v3h-1zM316 174h3v1h-3zM317 173h1v3h-1zM312 188h3v1h-3zM313 187h1v3h-1zM320 176h3v1h-3zM321 175h1v3h-1zM315 174h3v1h-3zM316 173h1v3h-1zM315 187h3v1h-3zM316 186h1v3h-1zM326 181h3v1h-3zM327 180h1v3h-1zM336 198h3v1h-3zM337 197h1v3h-1zM297 211h3v1h-3zM298 210h1v3h-1zM318 189h3v1h-3zM319 188h1v3h-1zM323 194h3v1h-3zM324 193h1v3h-1zM321 175h3v1h-3zM322 174h1v3h-1zM318 193h3v1h-3zM319 192h1v3h-1zM309 184h3v1h-3zM310 183h1v3h-1zM313 180h3v1h-3zM314 179h1v3h-1zM326 172h3v1h-3zM327 171h1v3h-1zM329 207h3v1h-3zM330 206h1v3h-1zM321 175h3v1h-3zM322 174h1v3h-1zM314 179h3v1h-3zM315 178h1v3h-1zM321 191h3v1h-3zM322 190h1v3h-1zM319 194h3v1h-3zM320 193h1v3h-1zM325 194h3v1h-3zM326 193h1v3h-1zM321 192h3v1h-3zM322 191h1v3h-1zM315 182h3v1h-3zM316 181h1v3h-1zM322 199h3v1h-3zM323 198h1v3h-1zM311 193h3v1h-3zM312 192h1v3h-1zM327 176h3v1h-3zM328 175h1v3h-1zM330 207h3v1h-3zM331 206h1v3h-1zM311 188h3v1h-3zM312 187h1v3h-1zM324 201h3v1h-3zM325 200h1v3h-1zM312 176h3v1h-3zM313 175h1v3h-1zM329 179h3v1h-3zM330 178h1v3h-1zM328 185h3v1h-3zM329 184h1v3h-1zM319 184h3v1h-3zM320 183h1v3h-1zM329 201h3v1h-3zM330 200h1v3h-1zM317 175h3v1h-3zM318 174h1v3h-1zM315 193h3v1h-3zM316 192h1v3h-1zM316 181h3v1h-3zM317 180h1v3h-1zM319 196h3v1h-3zM320 195h1v3h-1zM318 193h3v1h-3zM319 192h1v3h-1zM322 186h3v1h-3zM323 185h1v3h-1zM315 214h3v1h-3zM316 213h1v3h-1zM327 191h3v1h-3zM328 190h1v3h-1zM329 202h3v1h-3zM330 201h1v3h-1zM316 178h3v1h-3zM317 177h1v3h-1zM309 190h3v1h-3zM310 189h1v3h-1zM326 192h3v1h-3zM327 191h1v3h-1zM330 193h3v1h-3zM331 192h1v3h-1zM319 188h3v1h-3zM320 187h1v3h-1zM310 183h3v1h-3zM311 182h1v3h-1zM333 185h3v1h-3zM334 184h1v3h-1zM305 182h3v1h-3zM306 181h1v3h-1zM324 189h3v1h-3zM325 188h1v3h-1zM318 200h3v1h-3zM319 199h1v3h-1zM313 214h3v1h-3zM314 213h1v3h-1zM325 197h3v1h-3zM326 196h1v3h-1zM310 202h3v1h-3zM311 201h1v3h-1zM323 198h3v1h-3zM324 197h1v3h-1zM331 199h3v1h-3zM332 198h1v3h-1zM322 197h3v1h-3zM323 196h1v3h-1zM313 189h3v1h-3zM314 188h1v3h-1zM306 188h3v1h-3zM307 187h1v3h-1zM310 195h3v1h-3zM311 194h1v3h-1zM305 210h3v1h-3zM306 209h1v3h-1zM334 199h3v1h-3zM335 198h1v3h-1zM318 208h3v1h-3zM319 207h1v3h-1zM312 178h3v1h-3zM313 177h1v3h-1zM310 194h3v1h-3zM311 193h1v3h-1zM312 195h3v1h-3zM313 194h1v3h-1zM318 197h3v1h-3zM319 196h1v3h-1zM310 177h3v1h-3zM311 176h1v3h-1zM334 173h3v1h-3zM335 172h1v3h-1zM314 170h3v1h-3zM315 169h1v3h-1zM314 187h3v1h-3zM315 186h1v3h-1zM323 215h3v1h-3zM324 214h1v3h-1zM332 194h3v1h-3zM333 193h1v3h-1zM331 179h3v1h-3zM332 178h1v3h-1zM316 195h3v1h-3zM317 194h1v3h-1zM323 188h3v1h-3zM324 187h1v3h-1zM322 193h3v1h-3zM323 192h1v3h-1zM325 187h3v1h-3zM326 186h1v3h-1zM323 178h3v1h-3zM324 177h1v3h-1zM313 186h3v1h-3zM314 185h1v3h-1zM310 199h3v1h-3zM311 198h1v3h-1zM322 195h3v1h-3zM323 194h1v3h-1zM311 204h3v1h-3zM312 203h1v3h-1zM332 181h3v1h-3zM333 180h1v3h-1zM321 202h3v1h-3zM322 201h1v3h-1zM312 192h3v1h-3zM313 191h1v3h-1zM318 194h3v1h-3zM319 193h1v3h-1zM316 204h3v1h-3zM317 203h1v3h-1zM319 190h3v1h-3zM320 189h1v3h-1zM328 194h3v1h-3zM329 193h1v3h-1zM309 198h3v1h-3zM310 197h1v3h-1zM305 198h3v1h-3zM306 197h1v3h-1zM323 200h3v1h-3zM324 199h1v3h-1zM319 205h3v1h-3zM320 204h1v3h-1zM322 197h3v1h-3zM323 196h1v3h-1zM324 187h3v1h-3zM325 186h1v3h-1zM319 217h3v1h-3zM320 216h1v3h-1zM327 191h3v1h-3zM328 190h1v3h-1zM313 196h3v1h-3zM314 195h1v3h-1zM321 184h3v1h-3zM322 183h1v3h-1zM314 170h3v1h-3zM315 169h1v3h-1zM311 184h3v1h-3zM312 183h1v3h-1zM326 192h3v1h-3zM327 191h1v3h-1zM325 197h3v1h-3zM326 196h1v3h-1zM305 192h3v1h-3zM306 191h1v3h-1zM311 200h3v1h-3zM312 199h1v3h-1zM323 202h3v1h-3zM324 201h1v3h-1zM329 202h3v1h-3zM330 201h1v3h-1zM315 192h3v1h-3zM316 191h1v3h-1zM319 193h3v1h-3zM320 192h1v3h-1zM309 190h3v1h-3zM310 189h1v3h-1zM341 183h3v1h-3zM342 182h1v3h-1zM324 206h3v1h-3zM325 205h1v3h-1zM328 179h3v1h-3zM329 178h1v3h-1zM326 191h3v1h-3zM327 190h1v3h-1zM328 194h3v1h-3zM329 193h1v3h-1zM325 170h3v1h-3zM326 169h1v3h-1zM318 199h3v1h-3zM319 198h1v3h-1zM327 188h3v1h-3zM328 187h1v3h-1zM321 194h3v1h-3zM322 193h1v3h-1zM331 189h3v1h-3zM332 188h1v3h-1zM314 176h3v1h-3zM315 175h1v3h-1zM316 194h3v1h-3zM317 193h1v3h-1zM326 193h3v1h-3zM327 192h1v3h-1zM331 202h3v1h-3zM332 201h1v3h-1zM322 197h3v1h-3zM323 196h1v3h-1zM315 175h3v1h-3zM316 174h1v3h-1zM320 203h3v1h-3zM321 202h1v3h-1zM316 200h3v1h-3zM317 199h1v3h-1zM336 200h3v1h-3zM337 199h1v3h-1zM328 197h3v1h-3zM329 196h1v3h-1zM331 185h3v1h-3zM332 184h1v3h-1zM323 197h3v1h-3zM324 196h1v3h-1zM316 188h3v1h-3zM317 187h1v3h-1zM330 221h3v1h-3zM331 220h1v3h-1zM334 190h3v1h-3zM335 189h1v3h-1zM325 181h3v1h-3zM326 180h1v3h-1zM320 188h3v1h-3zM321 187h1v3h-1zM329 207h3v1h-3zM330 206h1v3h-1zM317 186h3v1h-3zM318 185h1v3h-1zM327 167h3v1h-3zM328 166h1v3h-1zM315 207h3v1h-3zM316 206h1v3h-1zM313 195h3v1h-3zM314 194h1v3h-1zM325 187h3v1h-3zM326 186h1v3h-1zM323 199h3v1h-3zM324 198h1v3h-1zM336 183h3v1h-3zM337 182h1v3h-1zM318 180h3v1h-3zM319 179h1v3h-1zM321 202h3v1h-3zM322 201h1v3h-1zM311 187h3v1h-3zM312 186h1v3h-1zM305 197h3v1h-3zM306 196h1v3h-1zM306 192h3v1h-3zM307 191h1v3h-1zM324 200h3v1h-3zM325 199h1v3h-1zM311 193h3v1h-3zM312 192h1v3h-1zM330 171h3v1h-3zM331 170h1v3h-1zM332 199h3v1h-3zM333 198h1v3h-1zM318 187h3v1h-3zM319 186h1v3h-1zM334 201h3v1h-3zM335 200h1v3h-1zM322 193h3v1h-3zM323 192h1v3h-1zM330 206h3v1h-3zM331 205h1v3h-1zM319 189h3v1h-3zM320 188h1v3h-1zM328 171h3v1h-3zM329 170h1v3h-1zM313 189h3v1h-3zM314 188h1v3h-1zM326 197h3v1h-3zM327 196h1v3h-1zM317 188h3v1h-3zM318 187h1v3h-1zM319 187h3v1h-3zM320 186h1v3h-1zM326 207h3v1h-3zM327 206h1v3h-1zM322 190h3v1h-3zM323 189h1v3h-1zM320 203h3v1h-3zM321 202h1v3h-1zM326 193h3v1h-3zM327 192h1v3h-1zM327 177h3v1h-3zM328 176h1v3h-1zM309 182h3v1h-3zM310 181h1v3h-1zM325 189h3v1h-3zM326 188h1v3h-1zM326 195h3v1h-3zM327 194h1v3h-1zM314 184h3v1h-3zM315 183h1v3h-1zM324 177h3v1h-3zM325 176h1v3h-1zM310 182h3v1h-3zM311 181h1v3h-1zM332 187h3v1h-3zM333 186h1v3h-1zM319 183h3v1h-3zM320 182h1v3h-1zM320 186h3v1h-3zM321 185h1v3h-1zM330 211h3v1h-3zM331 210h1v3h-1zM319 195h3v1h-3zM320 194h1v3h-1zM325 184h3v1h-3zM326 183h1v3h-1zM312 192h3v1h-3zM313 191h1v3h-1zM316 208h3v1h-3zM317 207h1v3h-1zM309 198h3v1h-3zM310 197h1v3h-1zM319 191h3v1h-3zM320 190h1v3h-1zM329 178h3v1h-3zM330 177h1v3h-1zM322 175h3v1h-3zM323 174h1v3h-1zM328 188h3v1h-3zM329 187h1v3h-1zM312 191h3v1h-3zM313 190h1v3h-1zM313 175h3v1h-3zM314 174h1v3h-1zM317 178h3v1h-3zM318 177h1v3h-1zM325 191h3v1h-3zM326 190h1v3h-1zM323 169h3v1h-3zM324 168h1v3h-1zM320 174h3v1h-3zM321 173h1v3h-1zM326 191h3v1h-3zM327 190h1v3h-1zM319 198h3v1h-3zM320 197h1v3h-1zM320 195h3v1h-3zM321 194h1v3h-1zM331 202h3v1h-3zM332 201h1v3h-1zM316 208h3v1h-3zM317 207h1v3h-1zM322 201h3v1h-3zM323 200h1v3h-1zM334 189h3v1h-3zM335 188h1v3h-1zM321 214h3v1h-3zM322 213h1v3h-1zM326 209h3v1h-3zM327 208h1v3h-1zM316 201h3v1h-3zM317 200h1v3h-1zM337 184h3v1h-3zM338 183h1v3h-1zM302 196h3v1h-3zM303 195h1v3h-1zM311 171h3v1h-3zM312 170h1v3h-1zM312 189h3v1h-3zM313 188h1v3h-1zM334 167h3v1h-3zM335 166h1v3h-1zM323 188h3v1h-3zM324 187h1v3h-1zM318 202h3v1h-3zM319 201h1v3h-1zM310 192h3v1h-3zM311 191h1v3h-1zM323 208h3v1h-3zM324 207h1v3h-1zM321 192h3v1h-3zM322 191h1v3h-1zM315 193h3v1h-3zM316 192h1v3h-1zM308 189h3v1h-3zM309 188h1v3h-1zM311 197h3v1h-3zM312 196h1v3h-1zM322 192h3v1h-3zM323 191h1v3h-1zM323 204h3v1h-3zM324 203h1v3h-1zM321 208h3v1h-3zM322 207h1v3h-1zM319 196h3v1h-3zM320 195h1v3h-1zM306 181h3v1h-3zM307 180h1v3h-1zM321 198h3v1h-3zM322 197h1v3h-1zM312 206h3v1h-3zM313 205h1v3h-1zM321 199h3v1h-3zM322 198h1v3h-1zM324 195h3v1h-3zM325 194h1v3h-1zM315 202h3v1h-3zM316 201h1v3h-1zM312 206h3v1h-3zM313 205h1v3h-1zM329 165h3v1h-3zM330 164h1v3h-1zM323 208h3v1h-3zM324 207h1v3h-1zM315 200h3v1h-3zM316 199h1v3h-1zM296 197h3v1h-3zM297 196h1v3h-1zM320 186h3v1h-3zM321 185h1v3h-1zM326 194h3v1h-3zM327 193h1v3h-1zM330 198h3v1h-3zM331 197h1v3h-1zM315 177h3v1h-3zM316 176h1v3h-1zM315 200h3v1h-3zM316 199h1v3h-1zM317 193h3v1h-3zM318 192h1v3h-1zM327 207h3v1h-3zM328 206h1v3h-1zM311 199h3v1h-3zM312 198h1v3h-1zM320 190h3v1h-3zM321 189h1v3h-1zM313 193h3v1h-3zM314 192h1v3h-1zM323 199h3v1h-3zM324 198h1v3h-1zM308 194h3v1h-3zM309 193h1v3h-1zM324 198h3v1h-3zM325 197h1v3h-1zM316 185h3v1h-3zM317 184h1v3h-1zM319 179h3v1h-3zM320 178h1v3h-1zM325 186h3v1h-3zM326 185h1v3h-1zM330 178h3v1h-3zM331 177h1v3h-1zM307 184h3v1h-3zM308 183h1v3h-1zM329 196h3v1h-3zM330 195h1v3h-1zM325 175h3v1h-3zM326 174h1v3h-1zM318 180h3v1h-3zM319 179h1v3h-1zM332 200h3v1h-3zM333 199h1v3h-1zM322 187h3v1h-3zM323 186h1v3h-1zM331 192h3v1h-3zM332 191h1v3h-1zM316 179h3v1h-3zM317 178h1v3h-1zM313 181h3v1h-3zM314 180h1v3h-1zM331 189h3v1h-3zM332 188h1v3h-1zM338 209h3v1h-3zM339 208h1v3h-1zM326 197h3v1h-3zM327 196h1v3h-1zM328 175h3v1h-3zM329 174h1v3h-1zM317 197h3v1h-3zM318 196h1v3h-1zM310 202h3v1h-3zM311 201h1v3h-1zM319 199h3v1h-3zM320 198h1v3h-1zM333 180h3v1h-3zM334 179h1v3h-1zM305 191h3v1h-3zM306 190h1v3h-1zM316 214h3v1h-3zM317 213h1v3h-1zM305 183h3v1h-3zM306 182h1v3h-1zM321 196h3v1h-3zM322 195h1v3h-1zM328 184h3v1h-3zM329 183h1v3h-1zM310 179h3v1h-3zM311 178h1v3h-1zM317 188h3v1h-3zM318 187h1v3h-1zM331 203h3v1h-3zM332 202h1v3h-1zM320 204h3v1h-3zM321 203h1v3h-1zM310 183h3v1h-3zM311 182h1v3h-1zM310 187h3v1h-3zM311 186h1v3h-1zM304 183h3v1h-3zM305 182h1v3h-1zM327 171h3v1h-3zM328 170h1v3h-1zM314 198h3v1h-3zM315 197h1v3h-1zM329 208h3v1h-3zM330 207h1v3h-1zM328 207h3v1h-3zM329 206h1v3h-1zM315 187h3v1h-3zM316 186h1v3h-1zM316 206h3v1h-3zM317 205h1v3h-1zM327 203h3v1h-3zM328 202h1v3h-1zM322 189h3v1h-3zM323 188h1v3h-1zM323 192h3v1h-3zM324 191h1v3h-1zM307 188h3v1h-3zM308 187h1v3h-1zM328 195h3v1h-3zM329 194h1v3h-1zM313 211h3v1h-3zM314 210h1v3h-1zM302 183h3v1h-3zM303 182h1v3h-1zM315 180h3v1h-3zM316 179h1v3h-1zM324 201h3v1h-3zM325 200h1v3h-1zM338 193h3v1h-3zM339 192h1v3h-1zM317 173h3v1h-3zM318 172h1v3h-1zM310 182h3v1h-3zM311 181h1v3h-1zM338 184h3v1h-3zM339 183h1v3h-1zM322 186h3v1h-3zM323 185h1v3h-1zM318 196h3v1h-3zM319 195h1v3h-1zM312 202h3v1h-3zM313 201h1v3h-1zM312 191h3v1h-3zM313 190h1v3h-1zM333 194h3v1h-3zM334 193h1v3h-1zM318 185h3v1h-3zM319 184h1v3h-1zM316 203h3v1h-3zM317 202h1v3h-1zM316 206h3v1h-3zM317 205h1v3h-1zM333 190h3v1h-3zM334 189h1v3h-1zM316 185h3v1h-3zM317 184h1v3h-1zM326 213h3v1h-3zM327 212h1v3h-1zM323 202h3v1h-3zM324 201h1v3h-1zM322 183h3v1h-3zM323 182h1v3h-1zM313 175h3v1h-3zM314 174h1v3h-1zM326 189h3v1h-3zM327 188h1v3h-1zM334 205h3v1h-3zM335 204h1v3h-1zM320 187h3v1h-3zM321 186h1v3h-1zM313 190h3v1h-3zM314 189h1v3h-1zM310 187h3v1h-3zM311 186h1v3h-1zM322 199h3v1h-3zM323 198h1v3h-1zM318 207h3v1h-3zM319 206h1v3h-1zM320 179h3v1h-3zM321 178h1v3h-1zM321 189h3v1h-3zM322 188h1v3h-1zM308 190h3v1h-3zM309 189h1v3h-1zM327 186h3v1h-3zM328 185h1v3h-1zM322 180h3v1h-3zM323 179h1v3h-1zM320 201h3v1h-3zM321 200h1v3h-1zM322 194h3v1h-3zM323 193h1v3h-1zM328 200h3v1h-3zM329 199h1v3h-1zM321 208h3v1h-3zM322 207h1v3h-1zM314 189h3v1h-3zM315 188h1v3h-1zM330 198h3v1h-3zM331 197h1v3h-1zM317 188h3v1h-3zM318 187h1v3h-1zM315 191h3v1h-3zM316 190h1v3h-1zM308 196h3v1h-3zM309 195h1v3h-1zM321 191h3v1h-3zM322 190h1v3h-1zM312 177h3v1h-3zM313 176h1v3h-1zM316 208h3v1h-3zM317 207h1v3h-1zM324 194h3v1h-3zM325 193h1v3h-1zM321 181h3v1h-3zM322 180h1v3h-1zM329 170h3v1h-3zM330 169h1v3h-1zM323 192h3v1h-3zM324 191h1v3h-1zM317 199h3v1h-3zM318 198h1v3h-1zM318 203h3v1h-3zM319 202h1v3h-1zM316 204h3v1h-3zM317 203h1v3h-1zM326 189h3v1h-3zM327 188h1v3h-1zM321 199h3v1h-3zM322 198h1v3h-1zM317 177h3v1h-3zM318 176h1v3h-1zM327 194h3v1h-3zM328 193h1v3h-1zM321 202h3v1h-3zM322 201h1v3h-1zM317 186h3v1h-3zM318 185h1v3h-1zM308 191h3v1h-3zM309 190h1v3h-1zM324 193h3v1h-3zM325 192h1v3h-1zM322 194h3v1h-3zM323 193h1v3h-1zM321 208h3v1h-3zM322 207h1v3h-1zM317 181h3v1h-3zM318 180h1v3h-1zM314 206h3v1h-3zM315 205h1v3h-1zM319 180h3v1h-3zM320 179h1v3h-1zM322 186h3v1h-3zM323 185h1v3h-1zM319 184h3v1h-3zM320 183h1v3h-1zM319 192h3v1h-3zM320 191h1v3h-1zM317 187h3v1h-3zM318 186h1v3h-1zM323 197h3v1h-3zM324 196h1v3h-1zM322 193h3v1h-3zM323 192h1v3h-1zM314 215h3v1h-3zM315 214h1v3h-1zM327 196h3v1h-3zM328 195h1v3h-1zM327 190h3v1h-3zM328 189h1v3h-1zM327 196h3v1h-3zM328 195h1v3h-1zM319 199h3v1h-3zM320 198h1v3h-1zM319 190h3v1h-3zM320 189h1v3h-1zM311 181h3v1h-3zM312 180h1v3h-1zM327 184h3v1h-3zM328 183h1v3h-1zM303 194h3v1h-3zM304 193h1v3h-1zM317 201h3v1h-3zM318 200h1v3h-1zM318 197h3v1h-3zM319 196h1v3h-1zM328 192h3v1h-3zM329 191h1v3h-1zM320 198h3v1h-3zM321 197h1v3h-1zM313 187h3v1h-3zM314 186h1v3h-1zM309 195h3v1h-3zM310 194h1v3h-1zM315 207h3v1h-3zM316 206h1v3h-1zM321 204h3v1h-3zM322 203h1v3h-1zM321 206h3v1h-3zM322 205h1v3h-1zM319 189h3v1h-3zM320 188h1v3h-1zM315 194h3v1h-3zM316 193h1v3h-1zM319 182h3v1h-3zM320 181h1v3h-1zM329 202h3v1h-3zM330 201h1v3h-1zM311 188h3v1h-3zM312 187h1v3h-1zM321 179h3v1h-3zM322 178h1v3h-1zM334 187h3v1h-3zM335 186h1v3h-1zM325 195h3v1h-3zM326 194h1v3h-1zM317 170h3v1h-3zM318 169h1v3h-1zM326 178h3v1h-3zM327 177h1v3h-1zM314 202h3v1h-3zM315 201h1v3h-1zM321 193h3v1h-3zM322 192h1v3h-1zM333 192h3v1h-3zM334 191h1v3h-1zM336 176h3v1h-3zM337 175h1v3h-1zM306 209h3v1h-3zM307 208h1v3h-1zM326 203h3v1h-3zM327 202h1v3h-1zM336 200h3v1h-3zM337 199h1v3h-1zM316 181h3v1h-3zM317 180h1v3h-1zM323 198h3v1h-3zM324 197h1v3h-1zM333 204h3v1h-3zM334 203h1v3h-1zM316 189h3v1h-3zM317 188h1v3h-1zM324 190h3v1h-3zM325 189h1v3h-1zM320 188h3v1h-3zM321 187h1v3h-1zM305 198h3v1h-3zM306 197h1v3h-1zM323 190h3v1h-3zM324 189h1v3h-1zM319 189h3v1h-3zM320 188h1v3h-1zM328 178h3v1h-3zM329 177h1v3h-1zM338 175h3v1h-3zM339 174h1v3h-1zM326 202h3v1h-3zM327 201h1v3h-1zM317 208h3v1h-3zM318 207h1v3h-1zM324 201h3v1h-3zM325 200h1v3h-1zM322 207h3v1h-3zM323 206h1v3h-1zM329 187h3v1h-3zM330 186h1v3h-1zM309 192h3v1h-3zM310 191h1v3h-1zM311 196h3v1h-3zM312 195h1v3h-1zM304 191h3v1h-3zM305 190h1v3h-1zM325 209h3v1h-3zM326 208h1v3h-1zM320 179h3v1h-3zM321 178h1v3h-1zM315 186h3v1h-3zM316 185h1v3h-1zM315 189h3v1h-3zM316 188h1v3h-1zM316 185h3v1h-3zM317 184h1v3h-1zM313 201h3v1h-3zM314 200h1v3h-1zM318 172h3v1h-3zM319 171h1v3h-1zM316 204h3v1h-3zM317 203h1v3h-1zM332 202h3v1h-3zM333 201h1v3h-1zM323 196h3v1h-3zM324 195h1v3h-1zM314 207h3v1h-3zM315 206h1v3h-1zM316 216h3v1h-3zM317 215h1v3h-1zM330 194h3v1h-3zM331 193h1v3h-1zM324 200h3v1h-3zM325 199h1v3h-1zM323 196h3v1h-3zM324 195h1v3h-1zM326 198h3v1h-3zM327 197h1v3h-1zM334 187h3v1h-3zM335 186h1v3h-1zM311 185h3v1h-3zM312 184h1v3h-1zM314 199h3v1h-3zM315 198h1v3h-1zM306 187h3v1h-3zM307 186h1v3h-1zM325 202h3v1h-3zM326 201h1v3h-1zM317 201h3v1h-3zM318 200h1v3h-1zM315 188h3v1h-3zM316 187h1v3h-1zM314 196h3v1h-3zM315 195h1v3h-1zM326 193h3v1h-3zM327 192h1v3h-1zM319 191h3v1h-3zM320 190h1v3h-1zM316 204h3v1h-3zM317 203h1v3h-1zM331 193h3v1h-3zM332 192h1v3h-1zM312 195h3v1h-3zM313 194h1v3h-1zM310 173h3v1h-3zM311 172h1v3h-1zM342 199h3v1h-3zM343 198h1v3h-1zM317 178h3v1h-3zM318 177h1v3h-1zM316 189h3v1h-3zM317 188h1v3h-1zM315 209h3v1h-3zM316 208h1v3h-1zM319 211h3v1h-3zM320 210h1v3h-1zM327 189h3v1h-3zM328 188h1v3h-1zM327 180h3v1h-3zM328 179h1v3h-1zM325 197h3v1h-3zM326 196h1v3h-1zM318 188h3v1h-3zM319 187h1v3h-1zM308 196h3v1h-3zM309 195h1v3h-1zM323 179h3v1h-3zM324 178h1v3h-1zM333 204h3v1h-3zM334 203h1v3h-1zM329 208h3v1h-3zM330 207h1v3h-1zM319 178h3v1h-3zM320 177h1v3h-1zM327 185h3v1h-3zM328 184h1v3h-1zM317 185h3v1h-3zM318 184h1v3h-1zM320 200h3v1h-3zM321 199h1v3h-1zM310 173h3v1h-3zM311 172h1v3h-1zM318 195h3v1h-3zM319 194h1v3h-1zM322 190h3v1h-3zM323 189h1v3h-1zM319 185h3v1h-3zM320 184h1v3h-1zM327 200h3v1h-3zM328 199h1v3h-1zM336 173h3v1h-3zM337 172h1v3h-1zM331 179h3v1h-3zM332 178h1v3h-1zM318 185h3v1h-3zM319 184h1v3h-1zM315 200h3v1h-3zM316 199h1v3h-1zM315 189h3v1h-3zM316 188h1v3h-1zM312 184h3v1h-3zM313 183h1v3h-1zM321 197h3v1h-3zM322 196h1v3h-1zM324 188h3v1h-3zM325 187h1v3h-1zM322 186h3v1h-3zM323 185h1v3h-1zM322 190h3v1h-3zM323 189h1v3h-1zM322 196h3v1h-3zM323 195h1v3h-1zM319 220h3v1h-3zM320 219h1v3h-1zM314 182h3v1h-3zM315 181h1v3h-1zM335 195h3v1h-3zM336 194h1v3h-1zM329 191h3v1h-3zM330 190h1v3h-1zM313 190h3v1h-3zM314 189h1v3h-1zM313 208h3v1h-3zM314 207h1v3h-1zM316 201h3v1h-3zM317 200h1v3h-1zM321 200h3v1h-3zM322 199h1v3h-1zM331 188h3v1h-3zM332 187h1v3h-1zM329 184h3v1h-3zM330 183h1v3h-1zM329 196h3v1h-3zM330 195h1v3h-1zM329 190h3v1h-3zM330 189h1v3h-1zM330 187h3v1h-3zM331 186h1v3h-1zM327 200h3v1h-3zM328 199h1v3h-1zM324 181h3v1h-3zM325 180h1v3h-1zM320 185h3v1h-3zM321 184h1v3h-1zM306 201h3v1h-3zM307 200h1v3h-1zM319 192h3v1h-3zM320 191h1v3h-1zM335 200h3v1h-3zM336 199h1v3h-1zM316 184h3v1h-3zM317 183h1v3h-1zM315 200h3v1h-3zM316 199h1v3h-1zM329 186h3v1h-3zM330 185h1v3h-1zM321 207h3v1h-3zM322 206h1v3h-1zM317 201h3v1h-3zM318 200h1v3h-1zM333 198h3v1h-3zM334 197h1v3h-1zM326 209h3v1h-3zM327 208h1v3h-1zM327 196h3v1h-3zM328 195h1v3h-1zM316 186h3v1h-3zM317 185h1v3h-1zM325 209h3v1h-3zM326 208h1v3h-1zM324 196h3v1h-3zM325 195h1v3h-1zM327 205h3v1h-3zM328 204h1v3h-1zM330 195h3v1h-3zM331 194h1v3h-1zM330 205h3v1h-3zM331 204h1v3h-1zM322 184h3v1h-3zM323 183h1v3h-1zM326 180h3v1h-3zM327 179h1v3h-1zM311 179h3v1h-3zM312 178h1v3h-1zM326 201h3v1h-3zM327 200h1v3h-1zM326 173h3v1h-3zM327 172h1v3h-1zM317 175h3v1h-3zM318 174h1v3h-1zM314 179h3v1h-3zM315 178h1v3h-1zM320 195h3v1h-3zM321 194h1v3h-1zM311 197h3v1h-3zM312 196h1v3h-1zM323 185h3v1h-3zM324 184h1v3h-1zM323 201h3v1h-3zM324 200h1v3h-1zM313 196h3v1h-3zM314 195h1v3h-1zM321 205h3v1h-3zM322 204h1v3h-1zM329 203h3v1h-3zM330 202h1v3h-1zM329 186h3v1h-3zM330 185h1v3h-1zM329 195h3v1h-3zM330 194h1v3h-1zM319 191h3v1h-3zM320 190h1v3h-1zM318 198h3v1h-3zM319 197h1v3h-1zM317 195h3v1h-3zM318 194h1v3h-1zM325 193h3v1h-3zM326 192h1v3h-1zM340 200h3v1h-3zM341 199h1v3h-1zM332 194h3v1h-3zM333 193h1v3h-1zM334 201h3v1h-3zM335 200h1v3h-1zM332 194h3v1h-3zM333 193h1v3h-1zM307 192h3v1h-3zM308 191h1v3h-1zM319 203h3v1h-3zM320 202h1v3h-1zM317 203h3v1h-3zM318 202h1v3h-1zM331 206h3v1h-3zM332 205h1v3h-1zM334 200h3v1h-3zM335 199h1v3h-1zM315 191h3v1h-3zM316 190h1v3h-1zM321 195h3v1h-3zM322 194h1v3h-1zM325 195h3v1h-3zM326 194h1v3h-1zM316 175h3v1h-3zM317 174h1v3h-1zM315 182h3v1h-3zM316 181h1v3h-1zM315 209h3v1h-3zM316 208h1v3h-1zM328 193h3v1h-3zM329 192h1v3h-1zM313 164h3v1h-3zM314 163h1v3h-1zM330 192h3v1h-3zM331 191h1v3h-1zM321 195h3v1h-3zM322 194h1v3h-1zM327 181h3v1h-3zM328 180h1v3h-1zM333 216h3v1h-3zM334 215h1v3h-1zM315 205h3v1h-3zM316 204h1v3h-1zM314 201h3v1h-3zM315 200h1v3h-1zM324 191h3v1h-3zM325 190h1v3h-1zM312 198h3v1h-3zM313 197h1v3h-1zM315 202h3v1h-3zM316 201h1v3h-1zM320 198h3v1h-3zM321 197h1v3h-1zM322 186h3v1h-3zM323 185h1v3h-1zM310 195h3v1h-3zM311 194h1v3h-1zM317 194h3v1h-3zM318 193h1v3h-1zM325 196h3v1h-3zM326 195h1v3h-1zM332 183h3v1h-3zM333 182h1v3h-1zM304 196h3v1h-3zM305 195h1v3h-1zM331 193h3v1h-3zM332 192h1v3h-1zM328 195h3v1h-3zM329 194h1v3h-1zM312 195h3v1h-3zM313 194h1v3h-1zM308 178h3v1h-3zM309 177h1v3h-1zM324 202h3v1h-3zM325 201h1v3h-1zM317 201h3v1h-3zM318 200h1v3h-1zM322 179h3v1h-3zM323 178h1v3h-1zM328 192h3v1h-3zM329 191h1v3h-1zM317 184h3v1h-3zM318 183h1v3h-1zM322 188h3v1h-3zM323 187h1v3h-1zM324 203h3v1h-3zM325 202h1v3h-1zM328 198h3v1h-3zM329 197h1v3h-1zM335 213h3v1h-3zM336 212h1v3h-1zM334 194h3v1h-3zM335 193h1v3h-1zM322 181h3v1h-3zM323 180h1v3h-1zM319 194h3v1h-3zM320 193h1v3h-1zM340 168h3v1h-3zM341 167h1v3h-1zM326 211h3v1h-3zM327 210h1v3h-1zM324 195h3v1h-3zM325 194h1v3h-1zM312 197h3v1h-3zM313 196h1v3h-1zM327 194h3v1h-3zM328 193h1v3h-1zM314 184h3v1h-3zM315 183h1v3h-1zM317 191h3v1h-3zM318 190h1v3h-1zM310 185h3v1h-3zM311 184h1v3h-1zM316 187h3v1h-3zM317 186h1v3h-1zM321 196h3v1h-3zM322 195h1v3h-1zM308 180h3v1h-3zM309 179h1v3h-1zM313 209h3v1h-3zM314 208h1v3h-1zM320 182h3v1h-3zM321 181h1v3h-1zM310 201h3v1h-3zM311 200h1v3h-1zM310 186h3v1h-3zM311 185h1v3h-1zM314 180h3v1h-3zM315 179h1v3h-1zM309 196h3v1h-3zM310 195h1v3h-1zM326 194h3v1h-3zM327 193h1v3h-1zM312 190h3v1h-3zM313 189h1v3h-1zM327 192h3v1h-3zM328 191h1v3h-1zM328 186h3v1h-3zM329 185h1v3h-1zM311 196h3v1h-3zM312 195h1v3h-1zM321 187h3v1h-3zM322 186h1v3h-1zM317 192h3v1h-3zM318 191h1v3h-1zM311 203h3v1h-3zM312 202h1v3h-1zM318 178h3v1h-3zM319 177h1v3h-1zM319 186h3v1h-3zM320 185h1v3h-1zM326 185h3v1h-3zM327 184h1v3h-1zM329 184h3v1h-3zM330 183h1v3h-1zM312 178h3v1h-3zM313 177h1v3h-1zM317 189h3v1h-3zM318 188h1v3h-1zM325 193h3v1h-3zM326 192h1v3h-1zM330 191h3v1h-3zM331 190h1v3h-1zM301 176h3v1h-3zM302 175h1v3h-1zM331 199h3v1h-3zM332 198h1v3h-1zM319 199h3v1h-3zM320 198h1v3h-1zM333 192h3v1h-3zM334 191h1v3h-1zM317 182h3v1h-3zM318 181h1v3h-1zM314 183h3v1h-3zM315 182h1v3h-1zM321 211h3v1h-3zM322 210h1v3h-1zM330 209h3v1h-3zM331 208h1v3h-1zM321 196h3v1h-3zM322 195h1v3h-1zM301 182h3v1h-3zM302 181h1v3h-1zM326 204h3v1h-3zM327 203h1v3h-1zM307 193h3v1h-3zM308 192h1v3h-1zM312 209h3v1h-3zM313 208h1v3h-1zM311 186h3v1h-3zM312 185h1v3h-1zM305 196h3v1h-3zM306 195h1v3h-1zM310 189h3v1h-3zM311 188h1v3h-1zM312 199h3v1h-3zM313 198h1v3h-1zM315 185h3v1h-3zM316 184h1v3h-1zM320 201h3v1h-3zM321 200h1v3h-1zM318 188h3v1h-3zM319 187h1v3h-1zM308 183h3v1h-3zM309 182h1v3h-1zM319 197h3v1h-3zM320 196h1v3h-1zM328 194h3v1h-3zM329 193h1v3h-1zM328 170h3v1h-3zM329 169h1v3h-1zM322 191h3v1h-3zM323 190h1v3h-1zM326 193h3v1h-3zM327 192h1v3h-1zM328 193h3v1h-3zM329 192h1v3h-1zM332 212h3v1h-3zM333 211h1v3h-1zM334 185h3v1h-3zM335 184h1v3h-1zM318 191h3v1h-3zM319 190h1v3h-1zM318 174h3v1h-3zM319 173h1v3h-1zM333 177h3v1h-3zM334 176h1v3h-1zM333 186h3v1h-3zM334 185h1v3h-1zM333 190h3v1h-3zM334 189h1v3h-1zM301 190h3v1h-3zM302 189h1v3h-1zM319 198h3v1h-3zM320 197h1v3h-1zM294 199h3v1h-3zM295 198h1v3h-1zM326 202h3v1h-3zM327 201h1v3h-1zM321 190h3v1h-3zM322 189h1v3h-1zM321 196h3v1h-3zM322 195h1v3h-1zM319 184h3v1h-3zM320 183h1v3h-1zM331 195h3v1h-3zM332 194h1v3h-1zM318 196h3v1h-3zM319 195h1v3h-1zM329 186h3v1h-3zM330 185h1v3h-1zM323 185h3v1h-3zM324 184h1v3h-1zM324 218h3v1h-3zM325 217h1v3h-1zM321 190h3v1h-3zM322 189h1v3h-1zM312 185h3v1h-3zM313 184h1v3h-1zM326 193h3v1h-3zM327 192h1v3h-1zM326 203h3v1h-3zM327 202h1v3h-1zM319 195h3v1h-3zM320 194h1v3h-1zM326 189h3v1h-3zM327 188h1v3h-1zM328 178h3v1h-3zM329 177h1v3h-1zM310 188h3v1h-3zM311 187h1v3h-1zM319 179h3v1h-3zM320 178h1v3h-1zM317 195h3v1h-3zM318 194h1v3h-1zM313 207h3v1h-3zM314 206h1v3h-1zM323 202h3v1h-3zM324 201h1v3h-1zM314 185h3v1h-3zM315 184h1v3h-1zM317 181h3v1h-3zM318 180h1v3h-1zM323 177h3v1h-3zM324 176h1v3h-1zM323 196h3v1h-3zM324 195h1v3h-1zM323 197h3v1h-3zM324 196h1v3h-1zM339 199h3v1h-3zM340 198h1v3h-1zM316 195h3v1h-3zM317 194h1v3h-1zM323 179h3v1h-3zM324 178h1v3h-1zM311 172h3v1h-3zM312 171h1v3h-1zM324 203h3v1h-3zM325 202h1v3h-1zM330 183h3v1h-3zM331 182h1v3h-1zM330 211h3v1h-3zM331 210h1v3h-1zM315 170h3v1h-3zM316 169h1v3h-1zM318 180h3v1h-3zM319 179h1v3h-1zM331 182h3v1h-3zM332 181h1v3h-1zM320 194h3v1h-3zM321 193h1v3h-1zM328 198h3v1h-3zM329 197h1v3h-1zM313 186h3v1h-3zM314 185h1v3h-1zM332 197h3v1h-3zM333 196h1v3h-1zM329 178h3v1h-3zM330 177h1v3h-1zM324 186h3v1h-3zM325 185h1v3h-1zM314 179h3v1h-3zM315 178h1v3h-1zM319 186h3v1h-3zM320 185h1v3h-1zM322 185h3v1h-3zM323 184h1v3h-1zM323 194h3v1h-3zM324 193h1v3h-1zM320 226h3v1h-3zM321 225h1v3h-1zM319 177h3v1h-3zM320 176h1v3h-1zM322 189h3v1h-3zM323 188h1v3h-1zM332 198h3v1h-3zM333 197h1v3h-1zM304 192h3v1h-3zM305 191h1v3h-1zM309 206h3v1h-3zM310 205h1v3h-1zM308 181h3v1h-3zM309 180h1v3h-1zM315 199h3v1h-3zM316 198h1v3h-1zM306 183h3v1h-3zM307 182h1v3h-1zM325 200h3v1h-3zM326 199h1v3h-1zM321 193h3v1h-3zM322 192h1v3h-1zM318 194h3v1h-3zM319 193h1v3h-1zM315 185h3v1h-3zM316 184h1v3h-1zM322 172h3v1h-3zM323 171h1v3h-1zM322 180h3v1h-3zM323 179h1v3h-1zM323 198h3v1h-3zM324 197h1v3h-1zM315 189h3v1h-3zM316 188h1v3h-1zM326 199h3v1h-3zM327 198h1v3h-1zM308 178h3v1h-3zM309 177h1v3h-1zM331 198h3v1h-3zM332 197h1v3h-1zM295 202h3v1h-3zM296 201h1v3h-1zM316 169h3v1h-3zM317 168h1v3h-1zM311 195h3v1h-3zM312 194h1v3h-1zM327 211h3v1h-3zM328 210h1v3h-1zM308 184h3v1h-3zM309 183h1v3h-1zM335 201h3v1h-3zM336 200h1v3h-1zM308 192h3v1h-3zM309 191h1v3h-1zM337 200h3v1h-3zM338 199h1v3h-1zM324 187h3v1h-3zM325 186h1v3h-1zM321 183h3v1h-3zM322 182h1v3h-1zM324 187h3v1h-3zM325 186h1v3h-1zM338 188h3v1h-3zM339 187h1v3h-1zM328 185h3v1h-3zM329 184h1v3h-1zM302 182h3v1h-3zM303 181h1v3h-1zM330 203h3v1h-3zM331 202h1v3h-1zM322 185h3v1h-3zM323 184h1v3h-1zM307 179h3v1h-3zM308 178h1v3h-1zM327 182h3v1h-3zM328 181h1v3h-1zM311 196h3v1h-3zM312 195h1v3h-1zM322 169h3v1h-3zM323 168h1v3h-1zM322 196h3v1h-3zM323 195h1v3h-1zM315 199h3v1h-3zM316 198h1v3h-1zM326 204h3v1h-3zM327 203h1v3h-1zM312 187h3v1h-3zM313 186h1v3h-1zM322 183h3v1h-3zM323 182h1v3h-1zM316 193h3v1h-3zM317 192h1v3h-1zM319 193h3v1h-3zM320 192h1v3h-1zM336 205h3v1h-3zM337 204h1v3h-1zM321 192h3v1h-3zM322 191h1v3h-1zM312 187h3v1h-3zM313 186h1v3h-1zM320 178h3v1h-3zM321 177h1v3h-1zM314 189h3v1h-3zM315 188h1v3h-1zM321 192h3v1h-3zM322 191h1v3h-1zM322 203h3v1h-3zM323 202h1v3h-1zM321 193h3v1h-3zM322 192h1v3h-1zM321 205h3v1h-3zM322 204h1v3h-1zM316 204h3v1h-3zM317 203h1v3h-1zM324 184h3v1h-3zM325 183h1v3h-1zM329 180h3v1h-3zM330 179h1v3h-1zM315 185h3v1h-3zM316 184h1v3h-1zM320 189h3v1h-3zM321 188h1v3h-1zM321 183h3v1h-3zM322 182h1v3h-1zM331 199h3v1h-3zM332 198h1v3h-1zM329 198h3v1h-3zM330 197h1v3h-1zM315 204h3v1h-3zM316 203h1v3h-1zM321 194h3v1h-3zM322 193h1v3h-1zM308 187h3v1h-3zM309 186h1v3h-1zM313 196h3v1h-3zM314 195h1v3h-1zM321 182h3v1h-3zM322 181h1v3h-1zM326 193h3v1h-3zM327 192h1v3h-1zM328 184h3v1h-3zM329 183h1v3h-1zM318 203h3v1h-3zM319 202h1v3h-1zM309 164h3v1h-3zM310 163h1v3h-1zM324 200h3v1h-3zM325 199h1v3h-1zM319 200h3v1h-3zM320 199h1v3h-1zM324 191h3v1h-3zM325 190h1v3h-1zM322 195h3v1h-3zM323 194h1v3h-1zM326 194h3v1h-3zM327 193h1v3h-1zM326 205h3v1h-3zM327 204h1v3h-1zM327 208h3v1h-3zM328 207h1v3h-1zM317 192h3v1h-3zM318 191h1v3h-1zM329 208h3v1h-3zM330 207h1v3h-1zM316 185h3v1h-3zM317 184h1v3h-1zM321 196h3v1h-3zM322 195h1v3h-1zM336 196h3v1h-3zM337 195h1v3h-1zM323 179h3v1h-3zM324 178h1v3h-1zM311 195h3v1h-3zM312 194h1v3h-1zM333 185h3v1h-3zM334 184h1v3h-1zM329 200h3v1h-3zM330 199h1v3h-1zM330 182h3v1h-3zM331 181h1v3h-1zM322 173h3v1h-3zM323 172h1v3h-1zM323 178h3v1h-3zM324 177h1v3h-1zM319 192h3v1h-3zM320 191h1v3h-1zM315 195h3v1h-3zM316 194h1v3h-1zM333 195h3v1h-3zM334 194h1v3h-1zM317 184h3v1h-3zM318 183h1v3h-1zM317 200h3v1h-3zM318 199h1v3h-1zM317 186h3v1h-3zM318 185h1v3h-1zM336 189h3v1h-3zM337 188h1v3h-1zM328 201h3v1h-3zM329 200h1v3h-1zM317 190h3v1h-3zM318 189h1v3h-1zM320 172h3v1h-3zM321 171h1v3h-1zM325 199h3v1h-3zM326 198h1v3h-1zM328 191h3v1h-3zM329 190h1v3h-1zM307 188h3v1h-3zM308 187h1v3h-1zM328 205h3v1h-3zM329 204h1v3h-1zM319 185h3v1h-3zM320 184h1v3h-1zM315 198h3v1h-3zM316 197h1v3h-1zM317 193h3v1h-3zM318 192h1v3h-1zM327 218h3v1h-3zM328 217h1v3h-1zM335 173h3v1h-3zM336 172h1v3h-1zM322 193h3v1h-3zM323 192h1v3h-1zM325 195h3v1h-3zM326 194h1v3h-1zM314 203h3v1h-3zM315 202h1v3h-1zM325 187h3v1h-3zM326 186h1v3h-1zM327 185h3v1h-3zM328 184h1v3h-1zM308 206h3v1h-3zM309 205h1v3h-1zM316 187h3v1h-3zM317 186h1v3h-1zM327 194h3v1h-3zM328 193h1v3h-1zM306 191h3v1h-3zM307 190h1v3h-1zM317 195h3v1h-3zM318 194h1v3h-1zM325 178h3v1h-3zM326 177h1v3h-1zM307 186h3v1h-3zM308 185h1v3h-1zM317 191h3v1h-3zM318 190h1v3h-1zM321 193h3v1h-3zM322 192h1v3h-1zM328 203h3v1h-3zM329 202h1v3h-1zM310 197h3v1h-3zM311 196h1v3h-1zM330 197h3v1h-3zM331 196h1v3h-1zM323 191h3v1h-3zM324 190h1v3h-1zM330 204h3v1h-3zM331 203h1v3h-1zM330 185h3v1h-3zM331 184h1v3h-1zM323 190h3v1h-3zM324 189h1v3h-1zM324 176h3v1h-3zM325 175h1v3h-1zM306 181h3v1h-3zM307 180h1v3h-1zM309 200h3v1h-3zM310 199h1v3h-1zM312 191h3v1h-3zM313 190h1v3h-1zM318 173h3v1h-3zM319 172h1v3h-1zM328 191h3v1h-3zM329 190h1v3h-1zM306 189h3v1h-3zM307 188h1v3h-1zM318 180h3v1h-3zM319 179h1v3h-1zM310 195h3v1h-3zM311 194h1v3h-1zM308 189h3v1h-3zM309 188h1v3h-1zM333 192h3v1h-3zM334 191h1v3h-1zM321 201h3v1h-3zM322 200h1v3h-1zM334 185h3v1h-3zM335 184h1v3h-1zM330 202h3v1h-3zM331 201h1v3h-1zM313 189h3v1h-3zM314 188h1v3h-1zM305 189h3v1h-3zM306 188h1v3h-1zM337 205h3v1h-3zM338 204h1v3h-1zM317 195h3v1h-3zM318 194h1v3h-1zM311 187h3v1h-3zM312 186h1v3h-1zM326 190h3v1h-3zM327 189h1v3h-1zM322 194h3v1h-3zM323 193h1v3h-1zM315 177h3v1h-3zM316 176h1v3h-1zM318 198h3v1h-3zM319 197h1v3h-1zM322 191h3v1h-3zM323 190h1v3h-1zM321 178h3v1h-3zM322 177h1v3h-1zM327 182h3v1h-3zM328 181h1v3h-1zM318 200h3v1h-3zM319 199h1v3h-1zM318 179h3v1h-3zM319 178h1v3h-1zM325 213h3v1h-3zM326 212h1v3h-1zM323 181h3v1h-3zM324 180h1v3h-1zM329 193h3v1h-3zM330 192h1v3h-1zM318 165h3v1h-3zM319 164h1v3h-1zM320 191h3v1h-3zM321 190h1v3h-1zM311 186h3v1h-3zM312 185h1v3h-1zM333 196h3v1h-3zM334 195h1v3h-1zM309 193h3v1h-3zM310 192h1v3h-1zM322 188h3v1h-3zM323 187h1v3h-1zM313 213h3v1h-3zM314 212h1v3h-1zM323 199h3v1h-3zM324 198h1v3h-1zM327 184h3v1h-3zM328 183h1v3h-1zM307 195h3v1h-3zM308 194h1v3h-1zM306 185h3v1h-3zM307 184h1v3h-1zM332 204h3v1h-3zM333 203h1v3h-1zM317 186h3v1h-3zM318 185h1v3h-1zM308 193h3v1h-3zM309 192h1v3h-1zM315 179h3v1h-3zM316 178h1v3h-1zM331 199h3v1h-3zM332 198h1v3h-1zM333 192h3v1h-3zM334 191h1v3h-1zM331 191h3v1h-3zM332 190h1v3h-1zM314 201h3v1h-3zM315 200h1v3h-1zM319 208h3v1h-3zM320 207h1v3h-1zM334 199h3v1h-3zM335 198h1v3h-1zM315 173h3v1h-3zM316 172h1v3h-1zM318 195h3v1h-3zM319 194h1v3h-1zM313 194h3v1h-3zM314 193h1v3h-1zM311 179h3v1h-3zM312 178h1v3h-1zM330 175h3v1h-3zM331 174h1v3h-1zM326 187h3v1h-3zM327 186h1v3h-1zM324 188h3v1h-3zM325 187h1v3h-1zM325 190h3v1h-3zM326 189h1v3h-1zM329 183h3v1h-3zM330 182h1v3h-1zM333 193h3v1h-3zM334 192h1v3h-1zM320 194h3v1h-3zM321 193h1v3h-1zM318 188h3v1h-3zM319 187h1v3h-1zM312 195h3v1h-3zM313 194h1v3h-1zM329 185h3v1h-3zM330 184h1v3h-1zM316 175h3v1h-3zM317 174h1v3h-1zM308 191h3v1h-3zM309 190h1v3h-1zM318 200h3v1h-3zM319 199h1v3h-1zM321 218h3v1h-3zM322 217h1v3h-1zM327 169h3v1h-3zM328 168h1v3h-1zM329 186h3v1h-3zM330 185h1v3h-1zM315 182h3v1h-3zM316 181h1v3h-1zM314 194h3v1h-3zM315 193h1v3h-1zM318 182h3v1h-3zM319 181h1v3h-1zM311 192h3v1h-3zM312 191h1v3h-1zM320 201h3v1h-3zM321 200h1v3h-1zM324 183h3v1h-3zM325 182h1v3h-1zM321 190h3v1h-3zM322 189h1v3h-1zM307 207h3v1h-3zM308 206h1v3h-1zM311 200h3v1h-3zM312 199h1v3h-1zM331 174h3v1h-3zM332 173h1v3h-1zM312 212h3v1h-3zM313 211h1v3h-1zM327 184h3v1h-3zM328 183h1v3h-1zM326 194h3v1h-3zM327 193h1v3h-1zM318 187h3v1h-3zM319 186h1v3h-1zM312 186h3v1h-3zM313 185h1v3h-1zM322 184h3v1h-3zM323 183h1v3h-1zM313 197h3v1h-3zM314 196h1v3h-1zM319 183h3v1h-3zM320 182h1v3h-1zM321 178h3v1h-3zM322 177h1v3h-1zM315 185h3v1h-3zM316 184h1v3h-1zM319 191h3v1h-3zM320 190h1v3h-1zM318 171h3v1h-3zM319 170h1v3h-1zM310 199h3v1h-3zM311 198h1v3h-1zM319 184h3v1h-3zM320 183h1v3h-1zM315 198h3v1h-3zM316 197h1v3h-1zM306 205h3v1h-3zM307 204h1v3h-1zM318 194h3v1h-3zM319 193h1v3h-1zM318 196h3v1h-3zM319 195h1v3h-1zM316 186h3v1h-3zM317 185h1v3h-1zM304 184h3v1h-3zM305 183h1v3h-1zM327 172h3v1h-3zM328 171h1v3h-1zM326 189h3v1h-3zM327 188h1v3h-1zM326 185h3v1h-3zM327 184h1v3h-1zM323 167h3v1h-3zM324 166h1v3h-1zM310 194h3v1h-3zM311 193h1v3h-1zM322 207h3v1h-3zM323 206h1v3h-1zM313 195h3v1h-3zM314 194h1v3h-1zM338 203h3v1h-3zM339 202h1v3h-1zM316 188h3v1h-3zM317 187h1v3h-1zM326 181h3v1h-3zM327 180h1v3h-1zM308 192h3v1h-3zM309 191h1v3h-1zM311 188h3v1h-3zM312 187h1v3h-1zM316 179h3v1h-3zM317 178h1v3h-1zM326 202h3v1h-3zM327 201h1v3h-1zM325 193h3v1h-3zM326 192h1v3h-1zM323 184h3v1h-3zM324 183h1v3h-1zM305 193h3v1h-3zM306 192h1v3h-1zM330 190h3v1h-3zM331 189h1v3h-1zM313 197h3v1h-3zM314 196h1v3h-1zM334 207h3v1h-3zM335 206h1v3h-1zM336 185h3v1h-3zM337 184h1v3h-1zM327 179h3v1h-3zM328 178h1v3h-1zM329 205h3v1h-3zM330 204h1v3h-1zM310 216h3v1h-3zM311 215h1v3h-1zM342 185h3v1h-3zM343 184h1v3h-1zM322 182h3v1h-3zM323 181h1v3h-1zM329 179h3v1h-3zM330 178h1v3h-1zM313 191h3v1h-3zM314 190h1v3h-1zM320 192h3v1h-3zM321 191h1v3h-1zM311 188h3v1h-3zM312 187h1v3h-1zM319 200h3v1h-3zM320 199h1v3h-1zM321 183h3v1h-3zM322 182h1v3h-1zM323 185h3v1h-3zM324 184h1v3h-1zM332 178h3v1h-3zM333 177h1v3h-1zM324 205h3v1h-3zM325 204h1v3h-1zM322 202h3v1h-3zM323 201h1v3h-1zM321 204h3v1h-3zM322 203h1v3h-1zM337 183h3v1h-3zM338 182h1v3h-1zM316 205h3v1h-3zM317 204h1v3h-1zM330 194h3v1h-3zM331 193h1v3h-1zM304 199h3v1h-3zM305 198h1v3h-1zM313 197h3v1h-3zM314 196h1v3h-1zM324 188h3v1h-3zM325 187h1v3h-1zM319 190h3v1h-3zM320 189h1v3h-1zM345 176h3v1h-3zM346 175h1v3h-1zM342 186h3v1h-3zM343 185h1v3h-1zM308 189h3v1h-3zM309 188h1v3h-1zM312 179h3v1h-3zM313 178h1v3h-1zM319 192h3v1h-3zM320 191h1v3h-1zM335 204h3v1h-3zM336 203h1v3h-1zM330 186h3v1h-3zM331 185h1v3h-1zM323 181h3v1h-3zM324 180h1v3h-1zM309 183h3v1h-3zM310 182h1v3h-1zM314 193h3v1h-3zM315 192h1v3h-1zM298 209h3v1h-3zM299 208h1v3h-1zM308 193h3v1h-3zM309 192h1v3h-1zM324 192h3v1h-3zM325 191h1v3h-1zM327 179h3v1h-3zM328 178h1v3h-1zM310 195h3v1h-3zM311 194h1v3h-1zM321 198h3v1h-3zM322 197h1v3h-1zM334 187h3v1h-3zM335 186h1v3h-1zM322 191h3v1h-3zM323 190h1v3h-1zM318 185h3v1h-3zM319 184h1v3h-1zM326 199h3v1h-3zM327 198h1v3h-1zM325 205h3v1h-3zM326 204h1v3h-1zM321 195h3v1h-3zM322 194h1v3h-1zM316 196h3v1h-3zM317 195h1v3h-1zM317 192h3v1h-3zM318 191h1v3h-1zM321 185h3v1h-3zM322 184h1v3h-1zM316 183h3v1h-3zM317 182h1v3h-1zM331 187h3v1h-3zM332 186h1v3h-1zM328 192h3v1h-3zM329 191h1v3h-1zM329 191h3v1h-3zM330 190h1v3h-1zM337 202h3v1h-3zM338 201h1v3h-1zM333 199h3v1h-3zM334 198h1v3h-1zM332 206h3v1h-3zM333 205h1v3h-1zM324 199h3v1h-3zM325 198h1v3h-1zM319 189h3v1h-3zM320 188h1v3h-1zM339 192h3v1h-3zM340 191h1v3h-1zM315 175h3v1h-3zM316 174h1v3h-1zM315 208h3v1h-3zM316 207h1v3h-1zM313 185h3v1h-3zM314 184h1v3h-1zM322 187h3v1h-3zM323 186h1v3h-1zM324 210h3v1h-3zM325 209h1v3h-1zM329 180h3v1h-3zM330 179h1v3h-1zM319 185h3v1h-3zM320 184h1v3h-1zM306 191h3v1h-3zM307 190h1v3h-1zM323 185h3v1h-3zM324 184h1v3h-1zM329 192h3v1h-3zM330 191h1v3h-1zM321 194h3v1h-3zM322 193h1v3h-1zM319 198h3v1h-3zM320 197h1v3h-1zM325 190h3v1h-3zM326 189h1v3h-1zM332 198h3v1h-3zM333 197h1v3h-1zM320 188h3v1h-3zM321 187h1v3h-1zM309 198h3v1h-3zM310 197h1v3h-1zM316 203h3v1h-3zM317 202h1v3h-1zM319 174h3v1h-3zM320 173h1v3h-1zM306 189h3v1h-3zM307 188h1v3h-1zM327 193h3v1h-3zM328 192h1v3h-1zM314 172h3v1h-3zM315 171h1v3h-1zM322 195h3v1h-3zM323 194h1v3h-1zM318 185h3v1h-3zM319 184h1v3h-1zM334 199h3v1h-3zM335 198h1v3h-1zM316 191h3v1h-3zM317 190h1v3h-1zM315 191h3v1h-3zM316 190h1v3h-1zM323 188h3v1h-3zM324 187h1v3h-1zM327 192h3v1h-3zM328 191h1v3h-1zM320 182h3v1h-3zM321 181h1v3h-1zM312 186h3v1h-3zM313 185h1v3h-1zM326 199h3v1h-3zM327 198h1v3h-1zM325 189h3v1h-3zM326 188h1v3h-1zM338 197h3v1h-3zM339 196h1v3h-1zM319 191h3v1h-3zM320 190h1v3h-1zM322 188h3v1h-3zM323 187h1v3h-1zM316 182h3v1h-3zM317 181h1v3h-1zM308 200h3v1h-3zM309 199h1v3h-1zM321 183h3v1h-3zM322 182h1v3h-1zM327 195h3v1h-3zM328 194h1v3h-1zM312 176h3v1h-3zM313 175h1v3h-1zM315 194h3v1h-3zM316 193h1v3h-1zM311 195h3v1h-3zM312 194h1v3h-1zM332 185h3v1h-3zM333 184h1v3h-1zM315 175h3v1h-3zM316 174h1v3h-1zM325 190h3v1h-3zM326 189h1v3h-1zM313 192h3v1h-3zM314 191h1v3h-1zM321 186h3v1h-3zM322 185h1v3h-1zM315 185h3v1h-3zM316 184h1v3h-1zM301 201h3v1h-3zM302 200h1v3h-1zM321 190h3v1h-3zM322 189h1v3h-1zM325 187h3v1h-3zM326 186h1v3h-1zM303 200h3v1h-3zM304 199h1v3h-1zM319 191h3v1h-3zM320 190h1v3h-1zM317 184h3v1h-3zM318 183h1v3h-1zM312 200h3v1h-3zM313 199h1v3h-1zM318 188h3v1h-3zM319 187h1v3h-1zM305 201h3v1h-3zM306 200h1v3h-1zM323 185h3v1h-3zM324 184h1v3h-1zM330 195h3v1h-3zM331 194h1v3h-1zM310 204h3v1h-3zM311 203h1v3h-1zM320 196h3v1h-3zM321 195h1v3h-1zM332 196h3v1h-3zM333 195h1v3h-1zM322 196h3v1h-3zM323 195h1v3h-1zM316 200h3v1h-3zM317 199h1v3h-1zM313 192h3v1h-3zM314 191h1v3h-1zM322 196h3v1h-3zM323 195h1v3h-1zM319 189h3v1h-3zM320 188h1v3h-1zM326 211h3v1h-3zM327 210h1v3h-1zM308 183h3v1h-3zM309 182h1v3h-1zM329 200h3v1h-3zM330 199h1v3h-1zM317 182h3v1h-3zM318 181h1v3h-1zM326 197h3v1h-3zM327 196h1v3h-1zM315 205h3v1h-3zM316 204h1v3h-1zM310 180h3v1h-3zM311 179h1v3h-1zM316 209h3v1h-3zM317 208h1v3h-1zM313 182h3v1h-3zM314 181h1v3h-1zM317 183h3v1h-3zM318 182h1v3h-1zM326 195h3v1h-3zM327 194h1v3h-1zM329 180h3v1h-3zM330 179h1v3h-1zM322 201h3v1h-3zM323 200h1v3h-1zM316 196h3v1h-3zM317 195h1v3h-1zM317 164h3v1h-3zM318 163h1v3h-1zM325 177h3v1h-3zM326 176h1v3h-1zM330 184h3v1h-3zM331 183h1v3h-1zM318 196h3v1h-3zM319 195h1v3h-1zM319 181h3v1h-3zM320 180h1v3h-1zM314 184h3v1h-3zM315 183h1v3h-1zM322 198h3v1h-3zM323 197h1v3h-1zM328 181h3v1h-3zM329 180h1v3h-1zM297 194h3v1h-3zM298 193h1v3h-1zM323 178h3v1h-3zM324 177h1v3h-1zM316 201h3v1h-3zM317 200h1v3h-1zM301 206h3v1h-3zM302 205h1v3h-1zM323 180h3v1h-3zM324 179h1v3h-1zM297 168h3v1h-3zM298 167h1v3h-1zM303 174h3v1h-3zM304 173h1v3h-1zM325 176h3v1h-3zM326 175h1v3h-1zM312 173h3v1h-3zM313 172h1v3h-1zM326 168h3v1h-3zM327 167h1v3h-1zM306 172h3v1h-3zM307 171h1v3h-1zM309 170h3v1h-3zM310 169h1v3h-1zM316 176h3v1h-3zM317 175h1v3h-1zM326 180h3v1h-3zM327 179h1v3h-1zM315 176h3v1h-3zM316 175h1v3h-1zM308 177h3v1h-3zM309 176h1v3h-1zM319 174h3v1h-3zM320 173h1v3h-1zM317 176h3v1h-3zM318 175h1v3h-1zM321 165h3v1h-3zM322 164h1v3h-1zM315 175h3v1h-3zM316 174h1v3h-1zM312 179h3v1h-3zM313 178h1v3h-1zM317 172h3v1h-3zM318 171h1v3h-1zM296 178h3v1h-3zM297 177h1v3h-1zM319 167h3v1h-3zM320 166h1v3h-1zM327 175h3v1h-3zM328 174h1v3h-1zM321 174h3v1h-3zM322 173h1v3h-1zM309 177h3v1h-3zM310 176h1v3h-1zM304 175h3v1h-3zM305 174h1v3h-1zM328 186h3v1h-3zM329 185h1v3h-1zM315 167h3v1h-3zM316 166h1v3h-1zM319 171h3v1h-3zM320 170h1v3h-1zM312 175h3v1h-3zM313 174h1v3h-1zM317 171h3v1h-3zM318 170h1v3h-1zM329 171h3v1h-3zM330 170h1v3h-1zM313 167h3v1h-3zM314 166h1v3h-1zM333 168h3v1h-3zM334 167h1v3h-1zM320 170h3v1h-3zM321 169h1v3h-1zM319 182h3v1h-3zM320 181h1v3h-1zM325 171h3v1h-3zM326 170h1v3h-1zM324 188h3v1h-3zM325 187h1v3h-1zM326 180h3v1h-3zM327 179h1v3h-1zM321 173h3v1h-3zM322 172h1v3h-1zM312 179h3v1h-3zM313 178h1v3h-1zM330 180h3v1h-3zM331 179h1v3h-1zM316 169h3v1h-3zM317 168h1v3h-1zM310 166h3v1h-3zM311 165h1v3h-1zM324 182h3v1h-3zM325 181h1v3h-1zM322 170h3v1h-3zM323 169h1v3h-1zM317 179h3v1h-3zM318 178h1v3h-1zM317 178h3v1h-3zM318 177h1v3h-1zM322 166h3v1h-3zM323 165h1v3h-1zM333 178h3v1h-3zM334 177h1v3h-1zM316 177h3v1h-3zM317 176h1v3h-1zM306 181h3v1h-3zM307 180h1v3h-1zM312 174h3v1h-3zM313 173h1v3h-1zM321 177h3v1h-3zM322 176h1v3h-1zM315 177h3v1h-3zM316 176h1v3h-1zM311 173h3v1h-3zM312 172h1v3h-1zM323 183h3v1h-3zM324 182h1v3h-1zM323 180h3v1h-3zM324 179h1v3h-1zM315 182h3v1h-3zM316 181h1v3h-1zM319 176h3v1h-3zM320 175h1v3h-1zM311 180h3v1h-3zM312 179h1v3h-1zM312 170h3v1h-3zM313 169h1v3h-1zM314 172h3v1h-3zM315 171h1v3h-1zM305 180h3v1h-3zM306 179h1v3h-1zM320 173h3v1h-3zM321 172h1v3h-1zM316 173h3v1h-3zM317 172h1v3h-1zM312 175h3v1h-3zM313 174h1v3h-1zM318 167h3v1h-3zM319 166h1v3h-1zM318 175h3v1h-3zM319 174h1v3h-1zM310 177h3v1h-3zM311 176h1v3h-1zM312 173h3v1h-3zM313 172h1v3h-1zM310 169h3v1h-3zM311 168h1v3h-1zM328 183h3v1h-3zM329 182h1v3h-1zM303 177h3v1h-3zM304 176h1v3h-1zM316 169h3v1h-3zM317 168h1v3h-1zM324 172h3v1h-3zM325 171h1v3h-1zM307 167h3v1h-3zM308 166h1v3h-1zM308 166h3v1h-3zM309 165h1v3h-1zM308 165h3v1h-3zM309 164h1v3h-1zM301 170h3v1h-3zM302 169h1v3h-1zM326 177h3v1h-3zM327 176h1v3h-1zM314 178h3v1h-3zM315 177h1v3h-1zM307 174h3v1h-3zM308 173h1v3h-1zM311 180h3v1h-3zM312 179h1v3h-1zM317 177h3v1h-3zM318 176h1v3h-1zM313 169h3v1h-3zM314 168h1v3h-1zM308 170h3v1h-3zM309 169h1v3h-1zM320 176h3v1h-3zM321 175h1v3h-1zM308 178h3v1h-3zM309 177h1v3h-1zM312 180h3v1h-3zM313 179h1v3h-1zM317 168h3v1h-3zM318 167h1v3h-1zM310 165h3v1h-3zM311 164h1v3h-1zM316 185h3v1h-3zM317 184h1v3h-1zM310 173h3v1h-3zM311 172h1v3h-1zM338 180h3v1h-3zM339 179h1v3h-1zM312 175h3v1h-3zM313 174h1v3h-1zM321 168h3v1h-3zM322 167h1v3h-1zM308 182h3v1h-3zM309 181h1v3h-1zM306 177h3v1h-3zM307 176h1v3h-1zM315 182h3v1h-3zM316 181h1v3h-1zM313 178h3v1h-3zM314 177h1v3h-1zM313 170h3v1h-3zM314 169h1v3h-1zM315 175h3v1h-3zM316 174h1v3h-1zM323 180h3v1h-3zM324 179h1v3h-1zM332 171h3v1h-3zM333 170h1v3h-1zM332 176h3v1h-3zM333 175h1v3h-1zM316 181h3v1h-3zM317 180h1v3h-1zM331 169h3v1h-3zM332 168h1v3h-1zM330 173h3v1h-3zM331 172h1v3h-1zM310 176h3v1h-3zM311 175h1v3h-1zM311 180h3v1h-3zM312 179h1v3h-1zM315 174h3v1h-3zM316 173h1v3h-1zM332 171h3v1h-3zM333 170h1v3h-1zM314 178h3v1h-3zM315 177h1v3h-1zM313 172h3v1h-3zM314 171h1v3h-1zM327 177h3v1h-3zM328 176h1v3h-1zM314 177h3v1h-3zM315 176h1v3h-1zM314 174h3v1h-3zM315 173h1v3h-1zM320 179h3v1h-3zM321 178h1v3h-1zM317 181h3v1h-3zM318 180h1v3h-1zM295 168h3v1h-3zM296 167h1v3h-1zM305 177h3v1h-3zM306 176h1v3h-1zM321 174h3v1h-3zM322 173h1v3h-1zM303 173h3v1h-3zM304 172h1v3h-1zM325 175h3v1h-3zM326 174h1v3h-1zM314 181h3v1h-3zM315 180h1v3h-1zM317 174h3v1h-3zM318 173h1v3h-1zM317 173h3v1h-3zM318 172h1v3h-1zM300 169h3v1h-3zM301 168h1v3h-1zM309 174h3v1h-3zM310 173h1v3h-1zM306 175h3v1h-3zM307 174h1v3h-1zM317 170h3v1h-3zM318 169h1v3h-1zM328 173h3v1h-3zM329 172h1v3h-1zM313 177h3v1h-3zM314 176h1v3h-1zM316 182h3v1h-3zM317 181h1v3h-1zM299 173h3v1h-3zM300 172h1v3h-1zM312 185h3v1h-3zM313 184h1v3h-1zM313 180h3v1h-3zM314 179h1v3h-1zM314 179h3v1h-3zM315 178h1v3h-1zM320 178h3v1h-3zM321 177h1v3h-1zM327 175h3v1h-3zM328 174h1v3h-1zM315 172h3v1h-3zM316 171h1v3h-1zM318 175h3v1h-3zM319 174h1v3h-1zM302 175h3v1h-3zM303 174h1v3h-1zM320 176h3v1h-3zM321 175h1v3h-1zM315 183h3v1h-3zM316 182h1v3h-1zM300 185h3v1h-3zM301 184h1v3h-1zM318 178h3v1h-3zM319 177h1v3h-1zM310 180h3v1h-3zM311 179h1v3h-1zM324 172h3v1h-3zM325 171h1v3h-1zM319 165h3v1h-3zM320 164h1v3h-1zM316 175h3v1h-3zM317 174h1v3h-1zM330 176h3v1h-3zM331 175h1v3h-1zM314 182h3v1h-3zM315 181h1v3h-1zM313 187h3v1h-3zM314 186h1v3h-1zM315 177h3v1h-3zM316 176h1v3h-1zM316 182h3v1h-3zM317 181h1v3h-1zM308 181h3v1h-3zM309 180h1v3h-1zM320 176h3v1h-3zM321 175h1v3h-1zM319 179h3v1h-3zM320 178h1v3h-1zM311 177h3v1h-3zM312 176h1v3h-1zM302 183h3v1h-3zM303 182h1v3h-1zM325 170h3v1h-3zM326 169h1v3h-1zM326 164h3v1h-3zM327 163h1v3h-1zM323 176h3v1h-3zM324 175h1v3h-1zM324 180h3v1h-3zM325 179h1v3h-1zM331 181h3v1h-3zM332 180h1v3h-1zM319 172h3v1h-3zM320 171h1v3h-1zM330 178h3v1h-3zM331 177h1v3h-1zM315 172h3v1h-3zM316 171h1v3h-1zM309 179h3v1h-3zM310 178h1v3h-1zM316 172h3v1h-3zM317 171h1v3h-1zM313 170h3v1h-3zM314 169h1v3h-1zM320 180h3v1h-3zM321 179h1v3h-1zM331 169h3v1h-3zM332 168h1v3h-1zM320 168h3v1h-3zM321 167h1v3h-1zM325 179h3v1h-3zM326 178h1v3h-1zM334 176h3v1h-3zM335 175h1v3h-1zM331 164h3v1h-3zM332 163h1v3h-1zM317 181h3v1h-3zM318 180h1v3h-1zM311 169h3v1h-3zM312 168h1v3h-1zM334 173h3v1h-3zM335 172h1v3h-1zM307 175h3v1h-3zM308 174h1v3h-1zM301 185h3v1h-3zM302 184h1v3h-1zM300 175h3v1h-3zM301 174h1v3h-1zM326 180h3v1h-3zM327 179h1v3h-1zM304 175h3v1h-3zM305 174h1v3h-1zM314 178h3v1h-3zM315 177h1v3h-1zM315 168h3v1h-3zM316 167h1v3h-1zM327 175h3v1h-3zM328 174h1v3h-1zM305 172h3v1h-3zM306 171h1v3h-1zM317 170h3v1h-3zM318 169h1v3h-1zM319 177h3v1h-3zM320 176h1v3h-1zM328 181h3v1h-3zM329 180h1v3h-1zM314 178h3v1h-3zM315 177h1v3h-1zM319 174h3v1h-3zM320 173h1v3h-1zM314 179h3v1h-3zM315 178h1v3h-1zM326 170h3v1h-3zM327 169h1v3h-1zM324 177h3v1h-3zM325 176h1v3h-1zM313 178h3v1h-3zM314 177h1v3h-1zM321 175h3v1h-3zM322 174h1v3h-1zM304 174h3v1h-3zM305 173h1v3h-1zM317 176h3v1h-3zM318 175h1v3h-1zM309 172h3v1h-3zM310 171h1v3h-1zM313 174h3v1h-3zM314 173h1v3h-1zM325 179h3v1h-3zM326 178h1v3h-1zM335 166h3v1h-3zM336 165h1v3h-1zM318 182h3v1h-3zM319 181h1v3h-1zM315 178h3v1h-3zM316 177h1v3h-1zM314 176h3v1h-3zM315 175h1v3h-1zM323 170h3v1h-3zM324 169h1v3h-1zM315 173h3v1h-3zM316 172h1v3h-1zM325 172h3v1h-3zM326 171h1v3h-1zM330 179h3v1h-3zM331 178h1v3h-1zM322 178h3v1h-3zM323 177h1v3h-1zM313 181h3v1h-3zM314 180h1v3h-1zM323 176h3v1h-3zM324 175h1v3h-1zM311 165h3v1h-3zM312 164h1v3h-1zM302 170h3v1h-3zM303 169h1v3h-1zM326 173h3v1h-3zM327 172h1v3h-1zM333 177h3v1h-3zM334 176h1v3h-1zM328 168h3v1h-3zM329 167h1v3h-1zM314 174h3v1h-3zM315 173h1v3h-1zM288 176h3v1h-3zM289 175h1v3h-1zM310 172h3v1h-3zM311 171h1v3h-1zM322 174h3v1h-3zM323 173h1v3h-1zM313 187h3v1h-3zM314 186h1v3h-1zM328 175h3v1h-3zM329 174h1v3h-1zM310 185h3v1h-3zM311 184h1v3h-1zM321 176h3v1h-3zM322 175h1v3h-1zM318 172h3v1h-3zM319 171h1v3h-1zM319 178h3v1h-3zM320 177h1v3h-1zM315 206h3v1h-3zM316 205h1v3h-1zM320 205h3v1h-3zM321 204h1v3h-1zM294 200h3v1h-3zM295 199h1v3h-1zM324 202h3v1h-3zM325 201h1v3h-1zM313 210h3v1h-3zM314 209h1v3h-1zM334 207h3v1h-3zM335 206h1v3h-1zM322 186h3v1h-3zM323 185h1v3h-1zM316 207h3v1h-3zM317 206h1v3h-1zM308 217h3v1h-3zM309 216h1v3h-1zM320 212h3v1h-3zM321 211h1v3h-1zM316 204h3v1h-3zM317 203h1v3h-1zM311 182h3v1h-3zM312 181h1v3h-1zM342 209h3v1h-3zM343 208h1v3h-1zM318 209h3v1h-3zM319 208h1v3h-1zM331 218h3v1h-3zM332 217h1v3h-1zM338 191h3v1h-3zM339 190h1v3h-1zM325 199h3v1h-3zM326 198h1v3h-1zM328 196h3v1h-3zM329 195h1v3h-1zM326 199h3v1h-3zM327 198h1v3h-1zM332 183h3v1h-3zM333 182h1v3h-1zM327 197h3v1h-3zM328 196h1v3h-1zM326 197h3v1h-3zM327 196h1v3h-1zM322 198h3v1h-3zM323 197h1v3h-1zM314 220h3v1h-3zM315 219h1v3h-1zM315 195h3v1h-3zM316 194h1v3h-1zM312 197h3v1h-3zM313 196h1v3h-1zM322 214h3v1h-3zM323 213h1v3h-1zM336 196h3v1h-3zM337 195h1v3h-1zM309 215h3v1h-3zM310 214h1v3h-1zM313 207h3v1h-3zM314 206h1v3h-1zM308 195h3v1h-3zM309 194h1v3h-1zM319 194h3v1h-3zM320 193h1v3h-1zM332 203h3v1h-3zM333 202h1v3h-1zM316 200h3v1h-3zM317 199h1v3h-1zM324 203h3v1h-3zM325 202h1v3h-1zM292 195h3v1h-3zM293 194h1v3h-1zM318 208h3v1h-3zM319 207h1v3h-1zM326 194h3v1h-3zM327 193h1v3h-1zM313 197h3v1h-3zM314 196h1v3h-1zM301 200h3v1h-3zM302 199h1v3h-1zM325 188h3v1h-3zM326 187h1v3h-1zM319 198h3v1h-3zM320 197h1v3h-1zM342 199h3v1h-3zM343 198h1v3h-1zM313 186h3v1h-3zM314 185h1v3h-1zM318 182h3v1h-3zM319 181h1v3h-1zM315 216h3v1h-3zM316 215h1v3h-1zM321 199h3v1h-3zM322 198h1v3h-1zM298 200h3v1h-3zM299 199h1v3h-1zM336 195h3v1h-3zM337 194h1v3h-1zM328 220h3v1h-3zM329 219h1v3h-1zM317 199h3v1h-3zM318 198h1v3h-1zM316 182h3v1h-3zM317 181h1v3h-1zM326 207h3v1h-3zM327 206h1v3h-1zM324 191h3v1h-3zM325 190h1v3h-1zM315 207h3v1h-3zM316 206h1v3h-1zM318 200h3v1h-3zM319 199h1v3h-1zM324 216h3v1h-3zM325 215h1v3h-1zM315 207h3v1h-3zM316 206h1v3h-1zM316 198h3v1h-3zM317 197h1v3h-1zM315 218h3v1h-3zM316 217h1v3h-1zM316 233h3v1h-3zM317 232h1v3h-1zM305 196h3v1h-3zM306 195h1v3h-1zM309 214h3v1h-3zM310 213h1v3h-1zM324 206h3v1h-3zM325 205h1v3h-1zM329 207h3v1h-3zM330 206h1v3h-1zM319 188h3v1h-3zM320 187h1v3h-1zM302 218h3v1h-3zM303 217h1v3h-1zM325 204h3v1h-3zM326 203h1v3h-1zM340 196h3v1h-3zM341 195h1v3h-1zM334 222h3v1h-3zM335 221h1v3h-1zM318 216h3v1h-3zM319 215h1v3h-1zM316 210h3v1h-3zM317 209h1v3h-1zM315 191h3v1h-3zM316 190h1v3h-1zM341 202h3v1h-3zM342 201h1v3h-1zM323 219h3v1h-3zM324 218h1v3h-1zM309 179h3v1h-3zM310 178h1v3h-1zM331 184h3v1h-3zM332 183h1v3h-1zM330 193h3v1h-3zM331 192h1v3h-1zM296 213h3v1h-3zM297 212h1v3h-1zM313 205h3v1h-3zM314 204h1v3h-1zM332 207h3v1h-3zM333 206h1v3h-1zM331 204h3v1h-3zM332 203h1v3h-1zM305 203h3v1h-3zM306 202h1v3h-1zM320 216h3v1h-3zM321 215h1v3h-1zM330 243h3v1h-3zM331 242h1v3h-1zM324 207h3v1h-3zM325 206h1v3h-1zM308 217h3v1h-3zM309 216h1v3h-1zM318 197h3v1h-3zM319 196h1v3h-1zM328 220h3v1h-3zM329 219h1v3h-1zM326 203h3v1h-3zM327 202h1v3h-1zM309 204h3v1h-3zM310 203h1v3h-1zM348 197h3v1h-3zM349 196h1v3h-1zM323 193h3v1h-3zM324 192h1v3h-1zM302 196h3v1h-3zM303 195h1v3h-1zM316 191h3v1h-3zM317 190h1v3h-1zM288 187h3v1h-3zM289 186h1v3h-1zM312 223h3v1h-3zM313 222h1v3h-1zM320 207h3v1h-3zM321 206h1v3h-1zM349 213h3v1h-3zM350 212h1v3h-1zM323 208h3v1h-3zM324 207h1v3h-1zM325 186h3v1h-3zM326 185h1v3h-1zM329 203h3v1h-3zM330 202h1v3h-1zM323 192h3v1h-3zM324 191h1v3h-1zM313 193h3v1h-3zM314 192h1v3h-1zM336 201h3v1h-3zM337 200h1v3h-1zM326 204h3v1h-3zM327 203h1v3h-1zM339 203h3v1h-3zM340 202h1v3h-1zM333 204h3v1h-3zM334 203h1v3h-1zM309 199h3v1h-3zM310 198h1v3h-1zM315 203h3v1h-3zM316 202h1v3h-1zM316 216h3v1h-3zM317 215h1v3h-1zM316 227h3v1h-3zM317 226h1v3h-1zM326 215h3v1h-3zM327 214h1v3h-1zM318 200h3v1h-3zM319 199h1v3h-1zM311 207h3v1h-3zM312 206h1v3h-1zM338 213h3v1h-3zM339 212h1v3h-1zM337 214h3v1h-3zM338 213h1v3h-1zM321 216h3v1h-3zM322 215h1v3h-1zM308 216h3v1h-3zM309 215h1v3h-1zM313 207h3v1h-3zM314 206h1v3h-1zM312 199h3v1h-3zM313 198h1v3h-1zM310 185h3v1h-3zM311 184h1v3h-1zM309 214h3v1h-3zM310 213h1v3h-1zM323 209h3v1h-3zM324 208h1v3h-1zM324 192h3v1h-3zM325 191h1v3h-1zM326 202h3v1h-3zM327 201h1v3h-1zM310 198h3v1h-3zM311 197h1v3h-1zM324 197h3v1h-3zM325 196h1v3h-1zM344 222h3v1h-3zM345 221h1v3h-1zM323 198h3v1h-3zM324 197h1v3h-1zM316 230h3v1h-3zM317 229h1v3h-1zM353 201h3v1h-3zM354 200h1v3h-1zM324 194h3v1h-3zM325 193h1v3h-1zM313 204h3v1h-3zM314 203h1v3h-1zM331 230h3v1h-3zM332 229h1v3h-1zM312 200h3v1h-3zM313 199h1v3h-1zM316 208h3v1h-3zM317 207h1v3h-1zM332 176h3v1h-3zM333 175h1v3h-1zM313 209h3v1h-3zM314 208h1v3h-1zM303 186h3v1h-3zM304 185h1v3h-1zM329 201h3v1h-3zM330 200h1v3h-1zM330 218h3v1h-3zM331 217h1v3h-1zM304 199h3v1h-3zM305 198h1v3h-1zM316 210h3v1h-3zM317 209h1v3h-1zM333 199h3v1h-3zM334 198h1v3h-1zM324 198h3v1h-3zM325 197h1v3h-1zM330 205h3v1h-3zM331 204h1v3h-1zM319 214h3v1h-3zM320 213h1v3h-1zM313 203h3v1h-3zM314 202h1v3h-1zM314 202h3v1h-3zM315 201h1v3h-1zM317 191h3v1h-3zM318 190h1v3h-1zM323 183h3v1h-3zM324 182h1v3h-1zM289 203h3v1h-3zM290 202h1v3h-1zM298 200h3v1h-3zM299 199h1v3h-1zM321 205h3v1h-3zM322 204h1v3h-1zM329 214h3v1h-3zM330 213h1v3h-1zM313 211h3v1h-3zM314 210h1v3h-1zM321 192h3v1h-3zM322 191h1v3h-1zM308 205h3v1h-3zM309 204h1v3h-1zM305 205h3v1h-3zM306 204h1v3h-1zM323 199h3v1h-3zM324 198h1v3h-1zM320 176h3v1h-3zM321 175h1v3h-1zM315 193h3v1h-3zM316 192h1v3h-1zM306 201h3v1h-3zM307 200h1v3h-1zM322 211h3v1h-3zM323 210h1v3h-1zM320 198h3v1h-3zM321 197h1v3h-1zM318 186h3v1h-3zM319 185h1v3h-1zM319 217h3v1h-3zM320 216h1v3h-1zM316 201h3v1h-3zM317 200h1v3h-1zM327 197h3v1h-3zM328 196h1v3h-1zM325 208h3v1h-3zM326 207h1v3h-1zM342 210h3v1h-3zM343 209h1v3h-1zM337 201h3v1h-3zM338 200h1v3h-1zM320 195h3v1h-3zM321 194h1v3h-1zM306 195h3v1h-3zM307 194h1v3h-1zM328 211h3v1h-3zM329 210h1v3h-1zM314 200h3v1h-3zM315 199h1v3h-1zM338 207h3v1h-3zM339 206h1v3h-1zM303 180h3v1h-3zM304 179h1v3h-1zM316 196h3v1h-3zM317 195h1v3h-1zM339 197h3v1h-3zM340 196h1v3h-1zM321 196h3v1h-3zM322 195h1v3h-1zM329 179h3v1h-3zM330 178h1v3h-1zM328 197h3v1h-3zM329 196h1v3h-1zM315 220h3v1h-3zM316 219h1v3h-1zM330 205h3v1h-3zM331 204h1v3h-1zM310 196h3v1h-3zM311 195h1v3h-1zM317 193h3v1h-3zM318 192h1v3h-1zM345 186h3v1h-3zM346 185h1v3h-1zM318 204h3v1h-3zM319 203h1v3h-1zM325 193h3v1h-3zM326 192h1v3h-1zM308 197h3v1h-3zM309 196h1v3h-1zM336 212h3v1h-3zM337 211h1v3h-1zM310 212h3v1h-3zM311 211h1v3h-1zM312 209h3v1h-3zM313 208h1v3h-1zM313 183h3v1h-3zM314 182h1v3h-1zM309 195h3v1h-3zM310 194h1v3h-1zM304 215h3v1h-3zM305 214h1v3h-1zM317 188h3v1h-3zM318 187h1v3h-1zM315 216h3v1h-3zM316 215h1v3h-1zM319 201h3v1h-3zM320 200h1v3h-1zM309 212h3v1h-3zM310 211h1v3h-1zM310 197h3v1h-3zM311 196h1v3h-1zM317 188h3v1h-3zM318 187h1v3h-1zM320 190h3v1h-3zM321 189h1v3h-1zM309 218h3v1h-3zM310 217h1v3h-1zM320 198h3v1h-3zM321 197h1v3h-1zM317 187h3v1h-3zM318 186h1v3h-1zM332 211h3v1h-3zM333 210h1v3h-1zM328 184h3v1h-3zM329 183h1v3h-1zM326 200h3v1h-3zM327 199h1v3h-1zM332 205h3v1h-3zM333 204h1v3h-1zM313 205h3v1h-3zM314 204h1v3h-1zM336 206h3v1h-3zM337 205h1v3h-1zM322 200h3v1h-3zM323 199h1v3h-1zM314 173h3v1h-3zM315 172h1v3h-1zM325 204h3v1h-3zM326 203h1v3h-1zM308 201h3v1h-3zM309 200h1v3h-1zM341 199h3v1h-3zM342 198h1v3h-1zM323 207h3v1h-3zM324 206h1v3h-1zM303 210h3v1h-3zM304 209h1v3h-1zM307 204h3v1h-3zM308 203h1v3h-1zM314 219h3v1h-3zM315 218h1v3h-1zM314 227h3v1h-3zM315 226h1v3h-1zM325 205h3v1h-3zM326 204h1v3h-1zM330 197h3v1h-3zM331 196h1v3h-1zM332 187h3v1h-3zM333 186h1v3h-1zM326 208h3v1h-3zM327 207h1v3h-1zM309 181h3v1h-3zM310 180h1v3h-1zM333 221h3v1h-3zM334 220h1v3h-1zM334 213h3v1h-3zM335 212h1v3h-1zM298 195h3v1h-3zM299 194h1v3h-1zM314 209h3v1h-3zM315 208h1v3h-1zM316 191h3v1h-3zM317 190h1v3h-1zM311 189h3v1h-3zM312 188h1v3h-1zM332 210h3v1h-3zM333 209h1v3h-1zM325 190h3v1h-3zM326 189h1v3h-1zM321 204h3v1h-3zM322 203h1v3h-1zM306 200h3v1h-3zM307 199h1v3h-1zM296 219h3v1h-3zM297 218h1v3h-1zM309 205h3v1h-3zM310 204h1v3h-1zM310 220h3v1h-3zM311 219h1v3h-1zM310 211h3v1h-3zM311 210h1v3h-1zM295 193h3v1h-3zM296 192h1v3h-1zM302 188h3v1h-3zM303 187h1v3h-1zM315 177h3v1h-3zM316 176h1v3h-1zM324 202h3v1h-3zM325 201h1v3h-1zM314 169h3v1h-3zM315 168h1v3h-1zM317 192h3v1h-3zM318 191h1v3h-1zM319 174h3v1h-3zM320 173h1v3h-1zM319 194h3v1h-3zM320 193h1v3h-1zM334 210h3v1h-3zM335 209h1v3h-1zM311 191h3v1h-3zM312 190h1v3h-1zM322 195h3v1h-3zM323 194h1v3h-1zM304 196h3v1h-3zM305 195h1v3h-1zM334 204h3v1h-3zM335 203h1v3h-1zM328 184h3v1h-3zM329 183h1v3h-1zM331 203h3v1h-3zM332 202h1v3h-1zM321 200h3v1h-3zM322 199h1v3h-1zM318 189h3v1h-3zM319 188h1v3h-1zM305 190h3v1h-3zM306 189h1v3h-1zM324 215h3v1h-3zM325 214h1v3h-1zM336 210h3v1h-3zM337 209h1v3h-1zM288 206h3v1h-3zM289 205h1v3h-1zM340 192h3v1h-3zM341 191h1v3h-1zM310 197h3v1h-3zM311 196h1v3h-1zM326 186h3v1h-3zM327 185h1v3h-1zM310 181h3v1h-3zM311 180h1v3h-1zM318 196h3v1h-3zM319 195h1v3h-1zM329 194h3v1h-3zM330 193h1v3h-1zM318 187h3v1h-3zM319 186h1v3h-1zM341 187h3v1h-3zM342 186h1v3h-1zM320 205h3v1h-3zM321 204h1v3h-1zM328 196h3v1h-3zM329 195h1v3h-1zM313 183h3v1h-3zM314 182h1v3h-1zM314 225h3v1h-3zM315 224h1v3h-1zM315 181h3v1h-3zM316 180h1v3h-1zM326 204h3v1h-3zM327 203h1v3h-1zM339 190h3v1h-3zM340 189h1v3h-1zM320 209h3v1h-3zM321 208h1v3h-1zM305 202h3v1h-3zM306 201h1v3h-1zM313 213h3v1h-3zM314 212h1v3h-1zM304 200h3v1h-3zM305 199h1v3h-1zM326 192h3v1h-3zM327 191h1v3h-1zM320 218h3v1h-3zM321 217h1v3h-1zM307 201h3v1h-3zM308 200h1v3h-1zM316 199h3v1h-3zM317 198h1v3h-1zM331 199h3v1h-3zM332 198h1v3h-1zM325 193h3v1h-3zM326 192h1v3h-1zM313 205h3v1h-3zM314 204h1v3h-1zM329 220h3v1h-3zM330 219h1v3h-1zM325 218h3v1h-3zM326 217h1v3h-1zM314 205h3v1h-3zM315 204h1v3h-1zM322 209h3v1h-3zM323 208h1v3h-1zM342 210h3v1h-3zM343 209h1v3h-1zM307 194h3v1h-3zM308 193h1v3h-1zM332 218h3v1h-3zM333 217h1v3h-1zM318 204h3v1h-3zM319 203h1v3h-1zM327 180h3v1h-3zM328 179h1v3h-1zM346 190h3v1h-3zM347 189h1v3h-1zM338 188h3v1h-3zM339 187h1v3h-1zM344 210h3v1h-3zM345 209h1v3h-1zM346 200h3v1h-3zM347 199h1v3h-1zM341 190h3v1h-3zM342 189h1v3h-1zM344 195h3v1h-3zM345 194h1v3h-1zM350 194h3v1h-3zM351 193h1v3h-1zM335 175h3v1h-3zM336 174h1v3h-1zM332 199h3v1h-3zM333 198h1v3h-1zM342 180h3v1h-3zM343 179h1v3h-1zM341 196h3v1h-3zM342 195h1v3h-1zM354 189h3v1h-3zM355 188h1v3h-1zM348 197h3v1h-3zM349 196h1v3h-1zM345 203h3v1h-3zM346 202h1v3h-1zM342 194h3v1h-3zM343 193h1v3h-1zM332 182h3v1h-3zM333 181h1v3h-1zM335 184h3v1h-3zM336 183h1v3h-1zM341 193h3v1h-3zM342 192h1v3h-1zM344 183h3v1h-3zM345 182h1v3h-1zM340 183h3v1h-3zM341 182h1v3h-1zM343 186h3v1h-3zM344 185h1v3h-1zM346 183h3v1h-3zM347 182h1v3h-1zM339 193h3v1h-3zM340 192h1v3h-1zM340 182h3v1h-3zM341 181h1v3h-1zM337 188h3v1h-3zM338 187h1v3h-1zM349 179h3v1h-3zM350 178h1v3h-1zM331 168h3v1h-3zM332 167h1v3h-1zM346 196h3v1h-3zM347 195h1v3h-1zM347 198h3v1h-3zM348 197h1v3h-1zM331 182h3v1h-3zM332 181h1v3h-1zM340 196h3v1h-3zM341 195h1v3h-1zM348 191h3v1h-3zM349 190h1v3h-1zM337 175h3v1h-3zM338 174h1v3h-1zM339 200h3v1h-3zM340 199h1v3h-1zM350 187h3v1h-3zM351 186h1v3h-1zM346 195h3v1h-3zM347 194h1v3h-1zM339 175h3v1h-3zM340 174h1v3h-1zM335 205h3v1h-3zM336 204h1v3h-1zM334 181h3v1h-3zM335 180h1v3h-1zM344 201h3v1h-3zM345 200h1v3h-1zM330 185h3v1h-3zM331 184h1v3h-1zM339 195h3v1h-3zM340 194h1v3h-1zM346 187h3v1h-3zM347 186h1v3h-1zM336 214h3v1h-3zM337 213h1v3h-1zM341 192h3v1h-3zM342 191h1v3h-1zM342 199h3v1h-3zM343 198h1v3h-1zM347 195h3v1h-3zM348 194h1v3h-1zM335 190h3v1h-3zM336 189h1v3h-1zM343 185h3v1h-3zM344 184h1v3h-1zM342 192h3v1h-3zM343 191h1v3h-1zM343 199h3v1h-3zM344 198h1v3h-1zM334 198h3v1h-3zM335 197h1v3h-1zM345 194h3v1h-3zM346 193h1v3h-1zM338 186h3v1h-3zM339 185h1v3h-1zM342 196h3v1h-3zM343 195h1v3h-1zM338 177h3v1h-3zM339 176h1v3h-1zM353 188h3v1h-3zM354 187h1v3h-1zM354 180h3v1h-3zM355 179h1v3h-1zM339 186h3v1h-3zM340 185h1v3h-1zM341 172h3v1h-3zM342 171h1v3h-1zM350 175h3v1h-3zM351 174h1v3h-1zM340 198h3v1h-3zM341 197h1v3h-1zM345 194h3v1h-3zM346 193h1v3h-1zM349 200h3v1h-3zM350 199h1v3h-1zM340 201h3v1h-3zM341 200h1v3h-1zM339 195h3v1h-3zM340 194h1v3h-1zM341 197h3v1h-3zM342 196h1v3h-1zM348 191h3v1h-3zM349 190h1v3h-1zM345 202h3v1h-3zM346 201h1v3h-1zM350 171h3v1h-3zM351 170h1v3h-1zM341 186h3v1h-3zM342 185h1v3h-1zM340 200h3v1h-3zM341 199h1v3h-1zM336 197h3v1h-3zM337 196h1v3h-1zM341 189h3v1h-3zM342 188h1v3h-1zM339 185h3v1h-3zM340 184h1v3h-1zM342 197h3v1h-3zM343 196h1v3h-1zM337 186h3v1h-3zM338 185h1v3h-1zM338 176h3v1h-3zM339 175h1v3h-1zM341 201h3v1h-3zM342 200h1v3h-1zM348 184h3v1h-3zM349 183h1v3h-1zM341 190h3v1h-3zM342 189h1v3h-1zM339 170h3v1h-3zM340 169h1v3h-1zM350 193h3v1h-3zM351 192h1v3h-1zM341 206h3v1h-3zM342 205h1v3h-1zM332 183h3v1h-3zM333 182h1v3h-1zM334 194h3v1h-3zM335 193h1v3h-1zM342 190h3v1h-3zM343 189h1v3h-1zM350 189h3v1h-3zM351 188h1v3h-1zM353 188h3v1h-3zM354 187h1v3h-1zM347 178h3v1h-3zM348 177h1v3h-1zM340 200h3v1h-3zM341 199h1v3h-1zM345 199h3v1h-3zM346 198h1v3h-1zM334 192h3v1h-3zM335 191h1v3h-1zM336 207h3v1h-3zM337 206h1v3h-1zM342 188h3v1h-3zM343 187h1v3h-1zM350 194h3v1h-3zM351 193h1v3h-1zM354 209h3v1h-3zM355 208h1v3h-1zM344 203h3v1h-3zM345 202h1v3h-1zM345 187h3v1h-3zM346 186h1v3h-1zM333 200h3v1h-3zM334 199h1v3h-1zM339 195h3v1h-3zM340 194h1v3h-1zM351 182h3v1h-3zM352 181h1v3h-1zM349 190h3v1h-3zM350 189h1v3h-1zM347 169h3v1h-3zM348 168h1v3h-1zM345 171h3v1h-3zM346 170h1v3h-1zM352 190h3v1h-3zM353 189h1v3h-1zM341 204h3v1h-3zM342 203h1v3h-1zM341 177h3v1h-3zM342 176h1v3h-1zM358 201h3v1h-3zM359 200h1v3h-1zM338 190h3v1h-3zM339 189h1v3h-1zM345 208h3v1h-3zM346 207h1v3h-1zM340 184h3v1h-3zM341 183h1v3h-1zM351 221h3v1h-3zM352 220h1v3h-1zM341 193h3v1h-3zM342 192h1v3h-1zM341 186h3v1h-3zM342 185h1v3h-1zM341 191h3v1h-3zM342 190h1v3h-1zM347 168h3v1h-3zM348 167h1v3h-1zM337 192h3v1h-3zM338 191h1v3h-1zM334 185h3v1h-3zM335 184h1v3h-1zM342 194h3v1h-3zM343 193h1v3h-1zM341 185h3v1h-3zM342 184h1v3h-1zM339 181h3v1h-3zM340 180h1v3h-1zM344 174h3v1h-3zM345 173h1v3h-1zM345 198h3v1h-3zM346 197h1v3h-1zM348 176h3v1h-3zM349 175h1v3h-1zM343 193h3v1h-3zM344 192h1v3h-1zM333 186h3v1h-3zM334 185h1v3h-1zM342 205h3v1h-3zM343 204h1v3h-1zM343 189h3v1h-3zM344 188h1v3h-1zM342 190h3v1h-3zM343 189h1v3h-1zM345 177h3v1h-3zM346 176h1v3h-1zM341 192h3v1h-3zM342 191h1v3h-1zM349 195h3v1h-3zM350 194h1v3h-1zM341 187h3v1h-3zM342 186h1v3h-1zM350 196h3v1h-3zM351 195h1v3h-1zM336 177h3v1h-3zM337 176h1v3h-1zM330 186h3v1h-3zM331 185h1v3h-1zM337 193h3v1h-3zM338 192h1v3h-1zM341 202h3v1h-3zM342 201h1v3h-1zM342 195h3v1h-3zM343 194h1v3h-1zM344 181h3v1h-3zM345 180h1v3h-1zM340 178h3v1h-3zM341 177h1v3h-1zM323 230h3v1h-3zM324 229h1v3h-1zM314 234h3v1h-3zM315 233h1v3h-1zM318 219h3v1h-3zM319 218h1v3h-1zM308 217h3v1h-3zM309 216h1v3h-1zM333 229h3v1h-3zM334 228h1v3h-1zM325 220h3v1h-3zM326 219h1v3h-1zM327 247h3v1h-3zM328 246h1v3h-1zM334 188h3v1h-3zM335 187h1v3h-1zM293 192h3v1h-3zM294 191h1v3h-1zM324 208h3v1h-3zM325 207h1v3h-1zM320 227h3v1h-3zM321 226h1v3h-1zM332 231h3v1h-3zM333 230h1v3h-1zM330 216h3v1h-3zM331 215h1v3h-1zM330 222h3v1h-3zM331 221h1v3h-1zM340 218h3v1h-3zM341 217h1v3h-1zM299 228h3v1h-3zM300 227h1v3h-1zM309 247h3v1h-3zM310 246h1v3h-1zM339 193h3v1h-3zM340 192h1v3h-1zM342 249h3v1h-3zM343 248h1v3h-1zM312 235h3v1h-3zM313 234h1v3h-1zM338 218h3v1h-3zM339 217h1v3h-1zM334 228h3v1h-3zM335 227h1v3h-1zM305 221h3v1h-3zM306 220h1v3h-1zM315 228h3v1h-3zM316 227h1v3h-1zM327 228h3v1h-3zM328 227h1v3h-1zM322 231h3v1h-3zM323 230h1v3h-1zM347 209h3v1h-3zM348 208h1v3h-1zM331 229h3v1h-3zM332 228h1v3h-1zM335 213h3v1h-3zM336 212h1v3h-1zM315 218h3v1h-3zM316 217h1v3h-1zM307 232h3v1h-3zM308 231h1v3h-1zM315 216h3v1h-3zM316 215h1v3h-1zM341 225h3v1h-3zM342 224h1v3h-1zM347 226h3v1h-3zM348 225h1v3h-1zM313 223h3v1h-3zM314 222h1v3h-1zM321 206h3v1h-3zM322 205h1v3h-1zM291 228h3v1h-3zM292 227h1v3h-1zM340 224h3v1h-3zM341 223h1v3h-1zM307 250h3v1h-3zM308 249h1v3h-1zM335 209h3v1h-3zM336 208h1v3h-1zM340 235h3v1h-3zM341 234h1v3h-1zM306 216h3v1h-3zM307 215h1v3h-1zM312 218h3v1h-3zM313 217h1v3h-1zM332 243h3v1h-3zM333 242h1v3h-1zM341 220h3v1h-3zM342 219h1v3h-1zM316 232h3v1h-3zM317 231h1v3h-1zM309 223h3v1h-3zM310 222h1v3h-1zM328 211h3v1h-3zM329 210h1v3h-1zM340 219h3v1h-3zM341 218h1v3h-1zM309 216h3v1h-3zM310 215h1v3h-1zM313 219h3v1h-3zM314 218h1v3h-1zM338 245h3v1h-3zM339 244h1v3h-1zM326 228h3v1h-3zM327 227h1v3h-1zM312 200h3v1h-3zM313 199h1v3h-1zM323 245h3v1h-3zM324 244h1v3h-1zM329 227h3v1h-3zM330 226h1v3h-1zM336 233h3v1h-3zM337 232h1v3h-1zM327 241h3v1h-3zM328 240h1v3h-1zM323 212h3v1h-3zM324 211h1v3h-1zM301 226h3v1h-3zM302 225h1v3h-1zM330 220h3v1h-3zM331 219h1v3h-1zM330 218h3v1h-3zM331 217h1v3h-1zM326 218h3v1h-3zM327 217h1v3h-1zM323 223h3v1h-3zM324 222h1v3h-1zM325 237h3v1h-3zM326 236h1v3h-1zM335 232h3v1h-3zM336 231h1v3h-1zM318 226h3v1h-3zM319 225h1v3h-1zM307 237h3v1h-3zM308 236h1v3h-1zM335 193h3v1h-3zM336 192h1v3h-1zM318 222h3v1h-3zM319 221h1v3h-1zM319 226h3v1h-3zM320 225h1v3h-1zM329 226h3v1h-3zM330 225h1v3h-1zM320 240h3v1h-3zM321 239h1v3h-1zM322 224h3v1h-3zM323 223h1v3h-1zM308 239h3v1h-3zM309 238h1v3h-1zM340 220h3v1h-3zM341 219h1v3h-1zM305 231h3v1h-3zM306 230h1v3h-1zM340 223h3v1h-3zM341 222h1v3h-1zM306 219h3v1h-3zM307 218h1v3h-1zM314 229h3v1h-3zM315 228h1v3h-1zM317 229h3v1h-3zM318 228h1v3h-1zM334 211h3v1h-3zM335 210h1v3h-1zM326 234h3v1h-3zM327 233h1v3h-1zM317 219h3v1h-3zM318 218h1v3h-1zM307 223h3v1h-3zM308 222h1v3h-1zM336 189h3v1h-3zM337 188h1v3h-1zM323 222h3v1h-3zM324 221h1v3h-1zM328 198h3v1h-3zM329 197h1v3h-1zM320 233h3v1h-3zM321 232h1v3h-1zM316 212h3v1h-3zM317 211h1v3h-1zM332 217h3v1h-3zM333 216h1v3h-1zM327 220h3v1h-3zM328 219h1v3h-1zM338 206h3v1h-3zM339 205h1v3h-1zM325 222h3v1h-3zM326 221h1v3h-1zM305 207h3v1h-3zM306 206h1v3h-1zM333 220h3v1h-3zM334 219h1v3h-1zM324 233h3v1h-3zM325 232h1v3h-1zM320 238h3v1h-3zM321 237h1v3h-1zM312 219h3v1h-3zM313 218h1v3h-1zM325 210h3v1h-3zM326 209h1v3h-1zM315 228h3v1h-3zM316 227h1v3h-1zM326 242h3v1h-3zM327 241h1v3h-1zM331 211h3v1h-3zM332 210h1v3h-1zM323 239h3v1h-3zM324 238h1v3h-1zM311 220h3v1h-3zM312 219h1v3h-1zM329 189h3v1h-3zM330 188h1v3h-1zM328 223h3v1h-3zM329 222h1v3h-1zM320 246h3v1h-3zM321 245h1v3h-1zM298 231h3v1h-3zM299 230h1v3h-1zM307 235h3v1h-3zM308 234h1v3h-1zM333 227h3v1h-3zM334 226h1v3h-1zM319 201h3v1h-3zM320 200h1v3h-1zM299 193h3v1h-3zM300 192h1v3h-1zM320 209h3v1h-3zM321 208h1v3h-1zM323 217h3v1h-3zM324 216h1v3h-1zM331 209h3v1h-3zM332 208h1v3h-1zM328 212h3v1h-3zM329 211h1v3h-1zM328 232h3v1h-3zM329 231h1v3h-1zM313 240h3v1h-3zM314 239h1v3h-1zM301 201h3v1h-3zM302 200h1v3h-1zM315 209h3v1h-3zM316 208h1v3h-1zM341 221h3v1h-3zM342 220h1v3h-1zM303 220h3v1h-3zM304 219h1v3h-1zM334 193h3v1h-3zM335 192h1v3h-1zM306 231h3v1h-3zM307 230h1v3h-1zM324 227h3v1h-3zM325 226h1v3h-1zM312 198h3v1h-3zM313 197h1v3h-1zM319 226h3v1h-3zM320 225h1v3h-1zM308 207h3v1h-3zM309 206h1v3h-1zM324 228h3v1h-3zM325 227h1v3h-1zM334 226h3v1h-3zM335 225h1v3h-1zM304 223h3v1h-3zM305 222h1v3h-1zM330 227h3v1h-3zM331 226h1v3h-1zM327 215h3v1h-3zM328 214h1v3h-1zM333 224h3v1h-3zM334 223h1v3h-1zM293 192h3v1h-3zM294 191h1v3h-1zM334 231h3v1h-3zM335 230h1v3h-1zM308 220h3v1h-3zM309 219h1v3h-1zM317 223h3v1h-3zM318 222h1v3h-1zM309 193h3v1h-3zM310 192h1v3h-1zM311 241h3v1h-3zM312 240h1v3h-1zM313 213h3v1h-3zM314 212h1v3h-1zM325 208h3v1h-3zM326 207h1v3h-1zM332 221h3v1h-3zM333 220h1v3h-1zM319 238h3v1h-3zM320 237h1v3h-1zM333 246h3v1h-3zM334 245h1v3h-1zM324 217h3v1h-3zM325 216h1v3h-1zM337 225h3v1h-3zM338 224h1v3h-1zM305 225h3v1h-3zM306 224h1v3h-1zM324 214h3v1h-3zM325 213h1v3h-1zM322 216h3v1h-3zM323 215h1v3h-1zM324 220h3v1h-3zM325 219h1v3h-1zM327 221h3v1h-3zM328 220h1v3h-1zM333 235h3v1h-3zM334 234h1v3h-1zM324 198h3v1h-3zM325 197h1v3h-1zM329 228h3v1h-3zM330 227h1v3h-1zM319 227h3v1h-3zM320 226h1v3h-1zM320 239h3v1h-3zM321 238h1v3h-1zM314 217h3v1h-3zM315 216h1v3h-1zM336 217h3v1h-3zM337 216h1v3h-1zM333 223h3v1h-3zM334 222h1v3h-1zM339 215h3v1h-3zM340 214h1v3h-1zM316 215h3v1h-3zM317 214h1v3h-1zM320 214h3v1h-3zM321 213h1v3h-1zM354 214h3v1h-3zM355 213h1v3h-1zM336 209h3v1h-3zM337 208h1v3h-1zM304 214h3v1h-3zM305 213h1v3h-1zM332 212h3v1h-3zM333 211h1v3h-1zM327 213h3v1h-3zM328 212h1v3h-1zM318 205h3v1h-3zM319 204h1v3h-1zM319 234h3v1h-3zM320 233h1v3h-1zM311 226h3v1h-3zM312 225h1v3h-1zM316 221h3v1h-3zM317 220h1v3h-1zM312 208h3v1h-3zM313 207h1v3h-1zM307 230h3v1h-3zM308 229h1v3h-1zM317 219h3v1h-3zM318 218h1v3h-1zM311 220h3v1h-3zM312 219h1v3h-1zM306 143h3v1h-3zM307 142h1v3h-1zM310 147h3v1h-3zM311 146h1v3h-1zM313 151h3v1h-3zM314 150h1v3h-1zM317 151h3v1h-3zM318 150h1v3h-1zM321 155h3v1h-3zM322 154h1v3h-1zM328 155h3v1h-3zM329 154h1v3h-1zM311 152h3v1h-3zM312 151h1v3h-1zM312 157h3v1h-3zM313 156h1v3h-1zM315 159h3v1h-3zM316 158h1v3h-1zM331 159h3v1h-3zM332 158h1v3h-1zM332 161h3v1h-3zM333 160h1v3h-1zM326 162h3v1h-3zM327 161h1v3h-1zM330 165h3v1h-3zM331 164h1v3h-1zM323 157h3v1h-3zM324 156h1v3h-1zM319 154h3v1h-3zM320 153h1v3h-1zM280 195h3v1h-3zM281 194h1v3h-1zM284 200h3v1h-3zM285 199h1v3h-1zM351 234h3v1h-3zM352 233h1v3h-1zM335 249h3v1h-3zM336 248h1v3h-1zM320 248h3v1h-3zM321 247h1v3h-1zM301 238h3v1h-3zM302 237h1v3h-1zM358 191h3v1h-3zM359 190h1v3h-1zM351 199h3v1h-3zM352 198h1v3h-1zM347 188h3v1h-3zM348 187h1v3h-1z" fill="#008000" shape-rendering="crispEdges"/>
<path d="M305 206h3v1h-3zM306 205h1v3h-1zM310 207h3v1h-3zM311 206h1v3h-1zM311 206h3v1h-3zM312 205h1v3h-1zM312 207h3v1h-3zM313 206h1v3h-1zM311 203h3v1h-3zM312 202h1v3h-1zM309 206h3v1h-3zM310 205h1v3h-1zM310 206h3v1h-3zM311 205h1v3h-1zM293 196h3v1h-3zM294 195h1v3h-1zM295 196h3v1h-3zM296 195h1v3h-1zM294 197h3v1h-3zM295 196h1v3h-1zM293 196h3v1h-3zM294 195h1v3h-1zM293 196h3v1h-3zM294 195h1v3h-1zM311 223h3v1h-3zM312 222h1v3h-1zM313 220h3v1h-3zM314 219h1v3h-1zM312 222h3v1h-3zM313 221h1v3h-1zM317 220h3v1h-3zM318 219h1v3h-1zM311 223h3v1h-3zM312 222h1v3h-1zM311 218h3v1h-3zM312 217h1v3h-1zM311 220h3v1h-3zM312 219h1v3h-1zM330 239h3v1h-3zM331 238h1v3h-1zM329 243h3v1h-3zM330 242h1v3h-1zM327 244h3v1h-3zM328 243h1v3h-1zM332 241h3v1h-3zM333 240h1v3h-1zM326 239h3v1h-3zM327 238h1v3h-1zM333 232h3v1h-3zM334 231h1v3h-1zM333 234h3v1h-3zM334 233h1v3h-1zM335 234h3v1h-3zM336 233h1v3h-1zM337 234h3v1h-3zM338 233h1v3h-1zM337 233h3v1h-3zM338 232h1v3h-1zM337 232h3v1h-3zM338 231h1v3h-1zM347 218h3v1h-3zM348 217h1v3h-1zM348 215h3v1h-3zM349 214h1v3h-1zM345 217h3v1h-3zM346 216h1v3h-1zM346 213h3v1h-3zM347 212h1v3h-1zM347 211h3v1h-3zM348 210h1v3h-1zM348 214h3v1h-3zM349 213h1v3h-1zM347 224h3v1h-3zM348 223h1v3h-1zM343 222h3v1h-3zM344 221h1v3h-1zM346 221h3v1h-3zM347 220h1v3h-1zM346 223h3v1h-3zM347 222h1v3h-1zM346 224h3v1h-3zM347 223h1v3h-1zM346 221h3v1h-3zM347 220h1v3h-1zM312 221h3v1h-3zM313 220h1v3h-1zM311 220h3v1h-3zM312 219h1v3h-1zM309 224h3v1h-3zM310 223h1v3h-1zM310 215h3v1h-3zM311 214h1v3h-1zM309 218h3v1h-3zM310 217h1v3h-1zM317 229h3v1h-3zM318 228h1v3h-1zM319 231h3v1h-3zM320 230h1v3h-1zM317 231h3v1h-3zM318 230h1v3h-1zM317 226h3v1h-3zM318 225h1v3h-1zM319 228h3v1h-3zM320 227h1v3h-1zM317 230h3v1h-3zM318 229h1v3h-1zM304 247h3v1h-3zM305 246h1v3h-1zM303 248h3v1h-3zM304 247h1v3h-1zM305 249h3v1h-3zM306 248h1v3h-1zM298 221h3v1h-3zM299 220h1v3h-1zM301 221h3v1h-3zM302 220h1v3h-1zM299 222h3v1h-3zM300 221h1v3h-1zM299 226h3v1h-3zM300 225h1v3h-1zM301 224h3v1h-3zM302 223h1v3h-1zM359 217h3v1h-3zM360 216h1v3h-1zM358 218h3v1h-3zM359 217h1v3h-1zM357 219h3v1h-3zM358 218h1v3h-1zM361 218h3v1h-3zM362 217h1v3h-1zM356 209h3v1h-3zM357 208h1v3h-1zM353 210h3v1h-3zM354 209h1v3h-1zM357 214h3v1h-3zM358 213h1v3h-1zM355 208h3v1h-3zM356 207h1v3h-1zM340 202h3v1h-3zM341 201h1v3h-1zM340 205h3v1h-3zM341 204h1v3h-1zM341 202h3v1h-3zM342 201h1v3h-1z" fill="#ee8820" shape-rendering="crispEdges"/>
<g font-size="11" fill="#000"><text x="9.5" y="406" text-anchor="middle">-0.30</text><text x="60.5" y="406" text-anchor="middle">-0.25</text><text x="111.5" y="406" text-anchor="middle">-0.20</text><text x="162.5" y="406" text-anchor="middle">-0.15</text><text x="213.5" y="406" text-anchor="middle">-0.10</text><text x="264.5" y="406" text-anchor="middle">-0.05</text><text x="316.5" y="406" text-anchor="middle">0.00</text><text x="367.5" y="406" text-anchor="middle">0.05</text><text x="418.5" y="406" text-anchor="middle">0.10</text><text x="469.5" y="406" text-anchor="middle">0.15</text><text x="520.5" y="406" text-anchor="middle">0.20</text><text x="571.5" y="406" text-anchor="middle">0.25</text><text x="622.5" y="406" text-anchor="middle">0.30</text><text transform="translate(14 -0.1) rotate(-90)" text-anchor="middle">0.20</text><text transform="translate(14 50.9) rotate(-90)" text-anchor="middle">0.15</text><text transform="translate(14 101.9) rotate(-90)" text-anchor="middle">0.10</text><text transform="translate(14 153.9) rotate(-90)" text-anchor="middle">0.05</text><text transform="translate(14 204.9) rotate(-90)" text-anchor="middle">0.00</text><text transform="translate(14 255.9) rotate(-90)" text-anchor="middle">-0.05</text><text transform="translate(14 306.9) rotate(-90)" text-anchor="middle">-0.10</text><text transform="translate(14 357.9) rotate(-90)" text-anchor="middle">-0.15</text><text transform="translate(14 408.9) rotate(-90)" text-anchor="middle">-0.20</text>
<text x="617" y="21" text-anchor="end" textLength="231">ORI=35.87298045° 138.38966583° 1003.712m</text>
<text x="617" y="33" text-anchor="end" textLength="182">AVE=E: 0.011m N: 0.006m U:-0.039m</text>
<text x="617" y="45" text-anchor="end" textLength="181">STD=E: 0.046m N: 0.080m U: 0.083m</text>
<text x="617" y="57" text-anchor="end" textLength="243">RMS=E: 0.048m N: 0.081m U: 0.092m 2D: 0.187m</text>
<text x="40.5" y="27" text-anchor="middle">N</text>
<text x="561.5" y="376" text-anchor="middle">0.05 m</text>
</g>
<path d="M40.5 35V86M30 72.5H50M40.5 35L35.5 54L44 60.5" stroke="#000" fill="none"/>
<path d="M536 384.5H587M536.5 380V390M586.5 380V390" stroke="#000" fill="none" shape-rendering="crispEdges"/>
</svg>
<div class="abs" style="left:634px;top:48px;width:1px;height:411px;background:#b8b8b8"></div><div class="abs" style="left:635px;top:48px;width:1px;height:411px;background:#fff"></div>
<div id="status">
 <span style="left:1.40px">[1]</span>
 <span style="left:14.90px">2008/05/14</span>
 <span style="left:73.90px">00:00:00</span>
 <span style="left:116.30px">-05/14</span>
 <span style="left:153.15px">23:59:30</span>
 <span style="left:199.90px;transform:scaleX(0.79);transform-origin:0 0">GPST</span>
 <span style="left:228.15px">:</span>
 <span style="left:233.90px;transform:scaleX(0.98);transform-origin:0 0">N=2851</span>
 <span style="left:276.30px;transform:scaleX(0.97);transform-origin:0 0">B=6.9km</span>
 <span style="left:322.40px">Q=</span>
 <span style="left:339.15px;color:#ee9a50;letter-spacing:0.06px">2:360(12.6%)</span>
 <span style="left:412.50px;color:#2c8040">1:2491(87.4%)</span>
</div>
<div id="bottom"></div>
<!-- corner pixels (desktop showing through rounded corners) -->
<div class="abs" style="left:0;top:0;width:3px;height:1px;background:#d02010"></div>
<div class="abs" style="left:0;top:1px;width:1px;height:2px;background:#d02010"></div>
<div class="abs" style="left:637px;top:0;width:3px;height:1px;background:#e8e8e8"></div>
<div class="abs" style="left:639px;top:1px;width:1px;height:2px;background:#303030"></div>
</body></html>
